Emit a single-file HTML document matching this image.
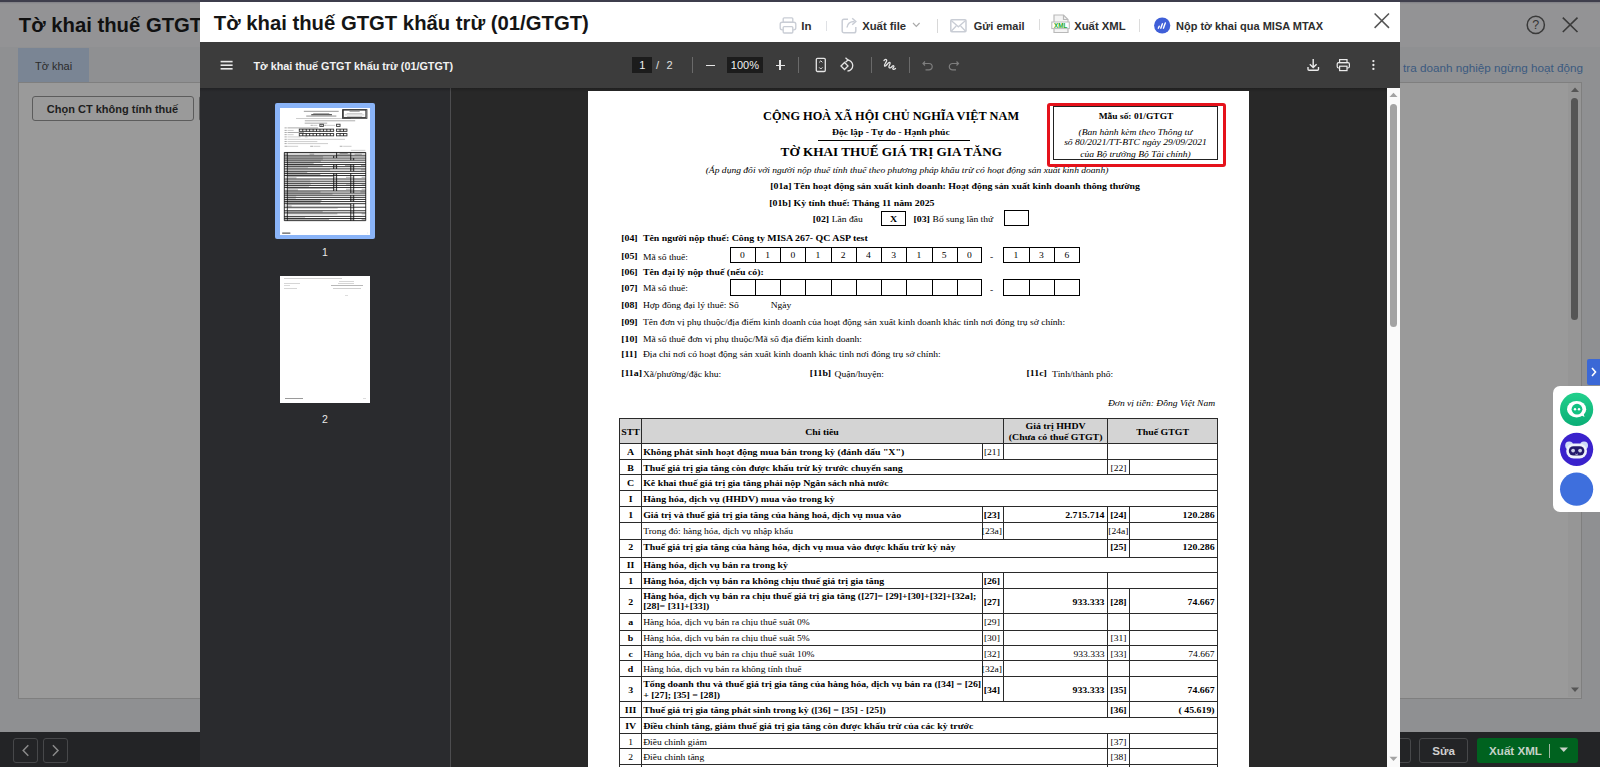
<!DOCTYPE html>
<html><head><meta charset="utf-8"><style>
*{box-sizing:border-box;margin:0;padding:0}
html,body{width:1600px;height:767px;overflow:hidden;background:#8f9092;position:relative}
.t{position:absolute;white-space:nowrap}
.r{position:absolute}
svg{position:absolute;overflow:visible}
</style></head><body>
<div class="r" style="left:0.00px;top:0.00px;width:1600.00px;height:47.00px;background:#939395"></div>
<div class="r" style="left:0.00px;top:0.00px;width:1600.00px;height:2.00px;background:#3e3e4c"></div>
<div class="r" style="left:0.00px;top:2.00px;width:1600.00px;height:2.00px;background:linear-gradient(#7f7f85,#939395)"></div>
<div class="t" style="left:18.80px;top:14.72px;font-size:20.3px;line-height:20.3px;font-family:'Liberation Sans',sans-serif;font-weight:bold;font-style:normal;color:#111;">Tờ khai thuế GTGT</div>
<svg style="left:1526px;top:15px" width="20" height="20"><circle cx="9.8" cy="9.9" r="8.6" fill="none" stroke="#3a3a3a" stroke-width="1.5"/><text x="9.8" y="14.3" font-family="Liberation Sans" font-size="12.5" text-anchor="middle" fill="#333">?</text></svg>
<svg style="left:1560px;top:15px" width="20" height="20"><path d="M2.8 2.6 L17.5 17 M17.5 2.6 L2.8 17" stroke="#3a3a3a" stroke-width="1.6"/></svg>
<div class="t" style="left:1403.00px;top:62.10px;font-size:11.7px;line-height:11.7px;font-family:'Liberation Sans',sans-serif;font-weight:normal;font-style:normal;color:#3b5a80;">tra doanh nghiệp ngừng hoạt động</div>
<div class="r" style="left:18.00px;top:48.00px;width:71.00px;height:34.00px;background:#7a8594"></div>
<div class="t" style="left:-546.50px;width:1200px;text-align:center;top:61.09px;font-size:11.0px;line-height:11.0px;font-family:'Liberation Sans',sans-serif;font-weight:normal;font-style:normal;color:#2b2b2b;">Tờ khai</div>
<div class="r" style="left:17.60px;top:82.00px;width:1564.40px;height:617.00px;background:#9a9a9a;border:1px solid #7f7f7f"></div>
<div class="r" style="left:1568.00px;top:83.00px;width:13.00px;height:614.00px;background:#969696"></div>
<div class="r" style="left:1571.00px;top:98.00px;width:7.00px;height:222.00px;background:#555;border-radius:4px"></div>
<svg style="left:1570px;top:86px" width="10" height="8"><path d="M1 6 L5 1.5 L9 6 Z" fill="#555"/></svg>
<svg style="left:1570px;top:686px" width="10" height="8"><path d="M1 1.5 L5 6 L9 1.5 Z" fill="#555"/></svg>
<div class="r" style="left:32.30px;top:96.00px;width:161.50px;height:25.00px;border:1px solid #5c5c5c;border-radius:3px"></div>
<div class="t" style="left:-487.50px;width:1200px;text-align:center;top:103.59px;font-size:11.0px;line-height:11.0px;font-family:'Liberation Sans',sans-serif;font-weight:bold;font-style:normal;color:#1e1e1e;">Chọn CT không tính thuế</div>
<div class="r" style="left:199.00px;top:96.00px;width:4.00px;height:25.00px;border:1px solid #5c5c5c;border-radius:3px"></div>
<div class="r" style="left:0.00px;top:732.00px;width:1600.00px;height:35.00px;background:#232426"></div>
<div class="r" style="left:13.00px;top:738.00px;width:25.00px;height:25.00px;border:1px solid #47484a;border-radius:3px"></div>
<div class="r" style="left:43.00px;top:738.00px;width:25.00px;height:25.00px;border:1px solid #47484a;border-radius:3px"></div>
<svg style="left:13px;top:738px" width="25" height="25"><path d="M15.3 7.3 L10.2 12.5 L15.3 17.7" fill="none" stroke="#8a8a8a" stroke-width="1.5"/></svg>
<svg style="left:43px;top:738px" width="25" height="25"><path d="M9.9 7.3 L15 12.5 L9.9 17.7" fill="none" stroke="#8a8a8a" stroke-width="1.5"/></svg>
<div class="r" style="left:1395.00px;top:738.00px;width:16.00px;height:25.00px;border:1px solid #47484a;border-radius:3px"></div>
<div class="r" style="left:1419.00px;top:738.00px;width:49.00px;height:25.00px;border:1px solid #47484a;border-radius:3px"></div>
<div class="t" style="left:843.60px;width:1200px;text-align:center;top:745.38px;font-size:11.6px;line-height:11.6px;font-family:'Liberation Sans',sans-serif;font-weight:bold;font-style:normal;color:#d0d0d0;">Sửa</div>
<div class="r" style="left:1477.00px;top:738.00px;width:101.00px;height:25.00px;background:#00621f;border-radius:3px"></div>
<div class="t" style="left:915.50px;width:1200px;text-align:center;top:745.38px;font-size:11.6px;line-height:11.6px;font-family:'Liberation Sans',sans-serif;font-weight:bold;font-style:normal;color:#c5d2c7;">Xuất XML</div>
<div class="r" style="left:1548.50px;top:744.00px;width:1.00px;height:14.00px;background:#9fb9a3"></div>
<svg style="left:1559px;top:747px" width="10" height="6"><path d="M0.5 0.5 L9 0.5 L4.75 5 Z" fill="#c8d2c8"/></svg>
<div class="r" style="left:1587.00px;top:359.00px;width:13.00px;height:26.00px;background:#3b68d6;border-radius:2px 0 0 2px"></div>
<svg style="left:1590px;top:366px" width="8" height="12"><path d="M2 2 L5.5 6 L2 10" fill="none" stroke="#fff" stroke-width="1.6"/></svg>
<div class="r" style="left:1553.00px;top:386.00px;width:47.00px;height:126.00px;background:#fff;border-radius:7px 0 0 7px"></div>
<svg style="left:1560px;top:393px" width="34" height="34"><defs><linearGradient id="g1" x1="0" y1="0" x2="0" y2="1"><stop offset="0" stop-color="#22d08c"/><stop offset="1" stop-color="#0aae76"/></linearGradient></defs>
<circle cx="16.6" cy="16.4" r="16.6" fill="url(#g1)"/><ellipse cx="16.6" cy="16.2" rx="9.6" ry="8.3" fill="#fff"/><path d="M20 21.5 L24.5 24 L23 18.5 Z" fill="#fff"/><circle cx="17" cy="16.2" r="5.4" fill="#12c282"/><circle cx="15" cy="16.2" r="1.2" fill="#fff"/><circle cx="19" cy="16.2" r="1.2" fill="#fff"/></svg>
<svg style="left:1560px;top:433px" width="34" height="34"><circle cx="16.6" cy="16.3" r="16.6" fill="#3a22cc"/><circle cx="9.2" cy="12.6" r="4" fill="#cfdcf7"/><circle cx="24" cy="12.6" r="4" fill="#cfdcf7"/><rect x="6.2" y="10.5" width="20.8" height="15" rx="7.5" fill="#eef2fb"/><rect x="8.8" y="13.2" width="15.6" height="9.4" rx="4.7" fill="#23196b"/><circle cx="13.1" cy="17.6" r="1.9" fill="#c8cde6"/><circle cx="20.1" cy="17.6" r="1.9" fill="#c8cde6"/><path d="M15.3 21 Q16.6 22 17.9 21" stroke="#c8cde6" stroke-width="0.9" fill="none"/></svg>
<svg style="left:1560px;top:473px" width="34" height="34"><circle cx="16.6" cy="16.2" r="16.6" fill="#3e6fdd"/></svg>
<div class="r" style="left:200.00px;top:2.00px;width:1200.00px;height:40.00px;background:#fff"></div>
<div class="t" style="left:213.80px;top:13.12px;font-size:20.3px;line-height:20.3px;font-family:'Liberation Sans',sans-serif;font-weight:bold;font-style:normal;color:#151515;">Tờ khai thuế GTGT khấu trừ (01/GTGT)</div>
<svg style="left:779px;top:16px" width="20" height="20"><rect x="4.2" y="1.8" width="9.6" height="4.6" rx="1" fill="none" stroke="#c9cdd5" stroke-width="1.35"/><rect x="1.2" y="6.2" width="15.6" height="7.6" rx="2" fill="none" stroke="#c9cdd5" stroke-width="1.35"/><rect x="4.2" y="10.6" width="9.6" height="6.4" rx="1" fill="#fff" stroke="#c9cdd5" stroke-width="1.35"/></svg>
<div class="t" style="left:801.30px;top:20.67px;font-size:11.5px;line-height:11.5px;font-family:'Liberation Sans',sans-serif;font-weight:bold;font-style:normal;color:#2e2e2e;">In</div>
<div class="r" style="left:826.30px;top:21.00px;width:1.00px;height:10.00px;background:#dfe1e5"></div>
<svg style="left:841px;top:16px" width="20" height="20"><path d="M7 3.2 H3 a1.8 1.8 0 0 0 -1.8 1.8 V15 a1.8 1.8 0 0 0 1.8 1.8 H13 a1.8 1.8 0 0 0 1.8 -1.8 V11" fill="none" stroke="#c9cdd5" stroke-width="1.5"/><path d="M6 11.5 C6.5 7.5 9 5.5 13.5 5.5" fill="none" stroke="#c9cdd5" stroke-width="1.5"/><path d="M11.2 2.2 L14.8 5.5 L11.2 8.8" fill="none" stroke="#c9cdd5" stroke-width="1.5"/></svg>
<div class="t" style="left:862.20px;top:20.83px;font-size:11.3px;line-height:11.3px;font-family:'Liberation Sans',sans-serif;font-weight:bold;font-style:normal;color:#2e2e2e;">Xuất file</div>
<svg style="left:912px;top:22px" width="9" height="6"><path d="M1 1 L4.3 4.3 L7.6 1" fill="none" stroke="#aaa" stroke-width="1.2"/></svg>
<div class="r" style="left:937.00px;top:19.00px;width:1.00px;height:14.00px;background:#d8d8d8"></div>
<svg style="left:950px;top:19px" width="18" height="15"><rect x="0.8" y="0.8" width="15.2" height="12" rx="1" fill="none" stroke="#c9cdd5" stroke-width="1.5"/><path d="M1.2 1.5 L8.4 7.8 L15.6 1.5 M1.2 12.2 L6.2 7 M15.6 12.2 L10.6 7" fill="none" stroke="#c9cdd5" stroke-width="1.3"/></svg>
<div class="t" style="left:973.80px;top:21.09px;font-size:11.0px;line-height:11.0px;font-family:'Liberation Sans',sans-serif;font-weight:bold;font-style:normal;color:#2e2e2e;">Gửi email</div>
<div class="r" style="left:1039.00px;top:19.00px;width:1.00px;height:11.00px;background:#dcdcdc"></div>
<svg style="left:1051px;top:14px" width="20" height="20"><path d="M3 1 H12.5 L17 5.5 V18.5 H3 Z" fill="#f4f4f4" stroke="#b9b9b9" stroke-width="1.2"/><path d="M12.5 1 V5.5 H17" fill="none" stroke="#b9b9b9" stroke-width="1.2"/><rect x="0.8" y="8" width="17.5" height="6.6" fill="#fff" stroke="#b9b9b9" stroke-width="1"/><text x="9.6" y="13.6" font-family="Liberation Sans" font-weight="bold" font-size="6.3" text-anchor="middle" fill="#17a82a">XML</text></svg>
<div class="t" style="left:1074.20px;top:21.33px;font-size:11.3px;line-height:11.3px;font-family:'Liberation Sans',sans-serif;font-weight:bold;font-style:normal;color:#2e2e2e;">Xuất XML</div>
<div class="r" style="left:1139.30px;top:19.00px;width:1.00px;height:13.00px;background:#dcdcdc"></div>
<svg style="left:1154px;top:17px" width="17" height="17"><circle cx="8.2" cy="8.5" r="8.1" fill="#3f5fd8"/><path d="M4.3 11.2 L5.2 9.2 M6.8 11.2 L8.4 6.8 M9.4 11.2 L11.3 6" stroke="#fff" stroke-width="1.4" stroke-linecap="round"/></svg>
<div class="t" style="left:1176.00px;top:21.29px;font-size:11.0px;line-height:11.0px;font-family:'Liberation Sans',sans-serif;font-weight:bold;font-style:normal;color:#2e2e2e;">Nộp tờ khai qua MISA MTAX</div>
<svg style="left:1373px;top:12px" width="18" height="18"><path d="M1.6 1.5 L16 15.9 M16 1.5 L1.6 15.9" stroke="#555" stroke-width="1.5"/></svg>
<div class="r" style="left:200.00px;top:42.00px;width:1200.00px;height:46.00px;background:#3c3c3c"></div>
<svg style="left:220px;top:60px" width="14" height="11"><rect x="0.6" y="0.8" width="12" height="1.6" fill="#e8e8e8"/><rect x="0.6" y="4.4" width="12" height="1.6" fill="#e8e8e8"/><rect x="0.6" y="8" width="12" height="1.6" fill="#e8e8e8"/></svg>
<div class="t" style="left:253.40px;top:60.66px;font-size:10.8px;line-height:10.8px;font-family:'Liberation Sans',sans-serif;font-weight:bold;font-style:normal;color:#f2f2f2;">Tờ khai thuế GTGT khấu trừ (01/GTGT)</div>
<div class="r" style="left:632.40px;top:56.70px;width:19.80px;height:16.40px;background:#1c1c1c"></div>
<div class="t" style="left:42.30px;width:1200px;text-align:center;top:60.19px;font-size:11.0px;line-height:11.0px;font-family:'Liberation Sans',sans-serif;font-weight:normal;font-style:normal;color:#f0f0f0;">1</div>
<div class="t" style="left:57.50px;width:1200px;text-align:center;top:60.19px;font-size:11.0px;line-height:11.0px;font-family:'Liberation Sans',sans-serif;font-weight:normal;font-style:normal;color:#e0e0e0;">/</div>
<div class="t" style="left:69.50px;width:1200px;text-align:center;top:60.19px;font-size:11.0px;line-height:11.0px;font-family:'Liberation Sans',sans-serif;font-weight:normal;font-style:normal;color:#e0e0e0;">2</div>
<div class="r" style="left:692.30px;top:57.40px;width:1.00px;height:15.70px;background:#6a6a6a"></div>
<div class="r" style="left:705.50px;top:64.60px;width:9.00px;height:1.50px;background:#e6e6e6"></div>
<div class="r" style="left:726.90px;top:56.70px;width:36.00px;height:16.40px;background:#1c1c1c"></div>
<div class="t" style="left:144.90px;width:1200px;text-align:center;top:60.19px;font-size:11.0px;line-height:11.0px;font-family:'Liberation Sans',sans-serif;font-weight:normal;font-style:normal;color:#f0f0f0;">100%</div>
<div class="r" style="left:775.50px;top:64.60px;width:9.00px;height:1.50px;background:#e6e6e6"></div>
<div class="r" style="left:779.30px;top:60.20px;width:1.50px;height:9.40px;background:#e6e6e6"></div>
<div class="r" style="left:797.60px;top:57.40px;width:1.00px;height:15.70px;background:#6a6a6a"></div>
<svg style="left:814px;top:57px" width="14" height="16"><rect x="2.3" y="1.3" width="9" height="13.2" rx="1.2" fill="none" stroke="#e4e4e4" stroke-width="1.3"/><path d="M5.2 5.4 L6.8 3.8 L8.4 5.4 M5.2 10.4 L6.8 12 L8.4 10.4" fill="none" stroke="#e4e4e4" stroke-width="1"/></svg>
<svg style="left:839px;top:56px" width="17" height="17"><path d="M2 10 L5.5 6.5 L9 10 L5.5 13.5 Z" fill="none" stroke="#e4e4e4" stroke-width="1.3"/><path d="M8 4 A5.5 5.5 0 1 1 8.5 15" fill="none" stroke="#e4e4e4" stroke-width="1.3"/><path d="M6.5 1.8 L9 4 L6.5 6.3" fill="none" stroke="#e4e4e4" stroke-width="1.3"/></svg>
<div class="r" style="left:871.20px;top:57.40px;width:1.00px;height:15.70px;background:#6a6a6a"></div>
<svg style="left:882px;top:57px" width="16" height="16"><path d="M2 3.5 C4 1.5 6 2.5 3.5 6 C1.5 9 2.5 10.5 5 7.5 C7.5 4.5 9 5 7.5 8 C6 11 8 12 10 9.5 C11.5 8 13 9 11 11 C10 12.5 12 13 13.5 11.5" fill="none" stroke="#e4e4e4" stroke-width="1.3" stroke-linecap="round"/></svg>
<div class="r" style="left:908.50px;top:57.40px;width:1.00px;height:15.70px;background:#6a6a6a"></div>
<svg style="left:922px;top:59px" width="12" height="12"><path d="M3 2.5 L1 4.5 L3 6.5 M1.2 4.5 H7 A3.2 3.2 0 0 1 7 10.9 H3.5" fill="none" stroke="#7e7e7e" stroke-width="1.2"/></svg>
<svg style="left:948px;top:59px" width="12" height="12"><path d="M8.5 2.5 L10.5 4.5 L8.5 6.5 M10.3 4.5 H4.5 A3.2 3.2 0 0 0 4.5 10.9 H8" fill="none" stroke="#7e7e7e" stroke-width="1.2"/></svg>
<svg style="left:1307px;top:58px" width="13" height="14"><path d="M6.2 1 V9.5 M2.8 6.2 L6.2 9.6 L9.6 6.2 M1 9 V11.2 Q1 12.3 2.1 12.3 H10.4 Q11.5 12.3 11.5 11.2 V9" fill="none" stroke="#ebebeb" stroke-width="1.4"/></svg>
<svg style="left:1336px;top:58px" width="16" height="15"><rect x="3.6" y="1.6" width="7.4" height="3" fill="none" stroke="#ebebeb" stroke-width="1.2"/><rect x="1.2" y="4.6" width="12.2" height="5.4" rx="1.5" fill="none" stroke="#ebebeb" stroke-width="1.2"/><rect x="3.6" y="8.2" width="7.4" height="4.4" fill="#3c3c3c" stroke="#ebebeb" stroke-width="1.2"/></svg>
<svg style="left:1370px;top:58px" width="8" height="14"><circle cx="3.4" cy="3.1" r="1.15" fill="#ececec"/><circle cx="3.4" cy="7" r="1.15" fill="#ececec"/><circle cx="3.4" cy="10.9" r="1.15" fill="#ececec"/></svg>
<div class="r" style="left:200.00px;top:88.00px;width:250.00px;height:679.00px;background:#2a2b2e"></div>
<div class="r" style="left:450.00px;top:88.00px;width:1.00px;height:679.00px;background:#4d4d4f"></div>
<div class="r" style="left:451.00px;top:88.00px;width:936.00px;height:679.00px;background:#282828"></div>
<div class="r" style="left:200.00px;top:88.00px;width:1187.00px;height:4.00px;background:linear-gradient(rgba(0,0,0,0.22),rgba(0,0,0,0))"></div>
<div class="r" style="left:275.30px;top:103.30px;width:99.70px;height:136.20px;background:#8ab4f8;border-radius:2px"></div>
<svg style="left:280px;top:108px" width="90" height="127"><rect x="0" y="0" width="90" height="127" fill="#fff"/><rect x="23.83" y="2.79" width="34.87" height="1.11" fill="#000" fill-opacity="0.36"/><rect x="33.22" y="5.02" width="16.06" height="0.90" fill="#000" fill-opacity="0.36"/><rect x="31.25" y="6.22" width="20.70" height="1.00" fill="#000" fill-opacity="0.8"/><rect x="26.22" y="7.48" width="30.14" height="1.18" fill="#000" fill-opacity="0.36"/><rect x="16.03" y="10.11" width="54.84" height="0.90" fill="#000" fill-opacity="0.22"/><rect x="24.81" y="12.36" width="50.38" height="0.90" fill="#000" fill-opacity="0.36"/><rect x="24.67" y="14.70" width="22.52" height="0.90" fill="#000" fill-opacity="0.36"/><rect x="30.59" y="16.84" width="2.23" height="0.90" fill="#000" fill-opacity="0.36"/><rect x="33.18" y="16.87" width="4.22" height="0.90" fill="#000" fill-opacity="0.22"/><rect x="39.87" y="16.26" width="3.49" height="2.13" fill="none" stroke="#111" stroke-width="0.9" stroke-opacity="0.85"/><rect x="41.13" y="16.84" width="0.97" height="0.90" fill="#000" fill-opacity="0.36"/><rect x="44.32" y="16.84" width="2.23" height="0.90" fill="#000" fill-opacity="0.36"/><rect x="46.92" y="16.87" width="8.25" height="0.90" fill="#000" fill-opacity="0.22"/><rect x="56.57" y="16.22" width="3.47" height="2.17" fill="none" stroke="#111" stroke-width="0.9" stroke-opacity="0.85"/><rect x="63.31" y="2.09" width="22.52" height="7.33" fill="none" stroke="#111" stroke-width="0.9" stroke-opacity="0.85"/><rect x="69.53" y="2.98" width="10.17" height="0.90" fill="#000" fill-opacity="0.36"/><rect x="66.77" y="4.98" width="15.54" height="0.90" fill="#000" fill-opacity="0.22"/><rect x="64.82" y="6.42" width="19.45" height="0.90" fill="#000" fill-opacity="0.22"/><rect x="67.01" y="7.97" width="15.08" height="0.90" fill="#000" fill-opacity="0.22"/><rect x="62.55" y="1.63" width="24.37" height="8.69" fill="none" stroke="#111" stroke-width="0.9" stroke-opacity="0.85"/><rect x="4.52" y="19.45" width="2.23" height="0.90" fill="#000" fill-opacity="0.36"/><rect x="7.48" y="19.45" width="30.66" height="0.90" fill="#000" fill-opacity="0.36"/><rect x="4.52" y="21.91" width="2.23" height="0.90" fill="#000" fill-opacity="0.36"/><rect x="7.48" y="21.94" width="6.14" height="0.90" fill="#000" fill-opacity="0.22"/><rect x="4.52" y="24.10" width="2.23" height="0.90" fill="#000" fill-opacity="0.36"/><rect x="7.48" y="24.10" width="16.47" height="0.90" fill="#000" fill-opacity="0.36"/><rect x="4.52" y="26.23" width="2.23" height="0.90" fill="#000" fill-opacity="0.36"/><rect x="7.48" y="26.26" width="6.14" height="0.90" fill="#000" fill-opacity="0.22"/><rect x="4.52" y="28.46" width="2.23" height="0.90" fill="#000" fill-opacity="0.36"/><rect x="7.48" y="28.48" width="13.08" height="0.90" fill="#000" fill-opacity="0.22"/><rect x="24.88" y="28.48" width="2.82" height="0.90" fill="#000" fill-opacity="0.22"/><rect x="4.52" y="30.81" width="2.23" height="0.90" fill="#000" fill-opacity="0.36"/><rect x="7.48" y="30.83" width="57.50" height="0.90" fill="#000" fill-opacity="0.22"/><rect x="4.52" y="33.14" width="2.23" height="0.90" fill="#000" fill-opacity="0.36"/><rect x="7.48" y="33.17" width="29.83" height="0.90" fill="#000" fill-opacity="0.22"/><rect x="4.52" y="35.17" width="2.16" height="0.90" fill="#000" fill-opacity="0.36"/><rect x="7.48" y="35.19" width="40.56" height="0.90" fill="#000" fill-opacity="0.22"/><rect x="4.52" y="37.79" width="2.83" height="0.90" fill="#000" fill-opacity="0.36"/><rect x="7.48" y="37.81" width="10.67" height="0.90" fill="#000" fill-opacity="0.22"/><rect x="30.20" y="37.79" width="2.91" height="0.90" fill="#000" fill-opacity="0.36"/><rect x="33.58" y="37.81" width="6.72" height="0.90" fill="#000" fill-opacity="0.22"/><rect x="59.72" y="37.79" width="2.76" height="0.90" fill="#000" fill-opacity="0.36"/><rect x="63.16" y="37.81" width="8.34" height="0.90" fill="#000" fill-opacity="0.22"/><rect x="70.79" y="41.85" width="14.60" height="0.90" fill="#000" fill-opacity="0.22"/><rect x="19.29" y="21.12" width="34.35" height="2.24" fill="none" stroke="#111" stroke-width="0.9" stroke-opacity="0.85"/><rect x="22.30" y="21.12" width="1.00" height="2.24" fill="#000" fill-opacity="0.8"/><rect x="25.73" y="21.12" width="1.00" height="2.24" fill="#000" fill-opacity="0.8"/><rect x="29.17" y="21.12" width="1.00" height="2.24" fill="#000" fill-opacity="0.8"/><rect x="32.60" y="21.12" width="1.00" height="2.24" fill="#000" fill-opacity="0.8"/><rect x="36.04" y="21.12" width="1.00" height="2.24" fill="#000" fill-opacity="0.8"/><rect x="39.47" y="21.12" width="1.00" height="2.24" fill="#000" fill-opacity="0.8"/><rect x="42.91" y="21.12" width="1.00" height="2.24" fill="#000" fill-opacity="0.8"/><rect x="46.34" y="21.12" width="1.00" height="2.24" fill="#000" fill-opacity="0.8"/><rect x="49.78" y="21.12" width="1.00" height="2.24" fill="#000" fill-opacity="0.8"/><rect x="56.53" y="21.12" width="10.40" height="2.24" fill="none" stroke="#111" stroke-width="0.9" stroke-opacity="0.85"/><rect x="59.57" y="21.12" width="1.00" height="2.24" fill="#000" fill-opacity="0.8"/><rect x="63.04" y="21.12" width="1.00" height="2.24" fill="#000" fill-opacity="0.8"/><rect x="54.74" y="21.92" width="0.43" height="0.90" fill="#000" fill-opacity="0.22"/><rect x="20.69" y="21.76" width="0.65" height="0.90" fill="#000" fill-opacity="0.22"/><rect x="24.12" y="21.76" width="0.65" height="0.90" fill="#000" fill-opacity="0.22"/><rect x="27.56" y="21.76" width="0.65" height="0.90" fill="#000" fill-opacity="0.22"/><rect x="30.99" y="21.76" width="0.65" height="0.90" fill="#000" fill-opacity="0.22"/><rect x="34.43" y="21.76" width="0.65" height="0.90" fill="#000" fill-opacity="0.22"/><rect x="37.86" y="21.76" width="0.65" height="0.90" fill="#000" fill-opacity="0.22"/><rect x="41.30" y="21.76" width="0.65" height="0.90" fill="#000" fill-opacity="0.22"/><rect x="44.73" y="21.76" width="0.65" height="0.90" fill="#000" fill-opacity="0.22"/><rect x="48.17" y="21.76" width="0.65" height="0.90" fill="#000" fill-opacity="0.22"/><rect x="51.60" y="21.76" width="0.65" height="0.90" fill="#000" fill-opacity="0.22"/><rect x="57.94" y="21.76" width="0.65" height="0.90" fill="#000" fill-opacity="0.22"/><rect x="61.41" y="21.76" width="0.65" height="0.90" fill="#000" fill-opacity="0.22"/><rect x="64.88" y="21.76" width="0.65" height="0.90" fill="#000" fill-opacity="0.22"/><rect x="19.29" y="25.56" width="34.35" height="2.28" fill="none" stroke="#111" stroke-width="0.9" stroke-opacity="0.85"/><rect x="22.30" y="25.56" width="1.00" height="2.28" fill="#000" fill-opacity="0.8"/><rect x="25.73" y="25.56" width="1.00" height="2.28" fill="#000" fill-opacity="0.8"/><rect x="29.17" y="25.56" width="1.00" height="2.28" fill="#000" fill-opacity="0.8"/><rect x="32.60" y="25.56" width="1.00" height="2.28" fill="#000" fill-opacity="0.8"/><rect x="36.04" y="25.56" width="1.00" height="2.28" fill="#000" fill-opacity="0.8"/><rect x="39.47" y="25.56" width="1.00" height="2.28" fill="#000" fill-opacity="0.8"/><rect x="42.91" y="25.56" width="1.00" height="2.28" fill="#000" fill-opacity="0.8"/><rect x="46.34" y="25.56" width="1.00" height="2.28" fill="#000" fill-opacity="0.8"/><rect x="49.78" y="25.56" width="1.00" height="2.28" fill="#000" fill-opacity="0.8"/><rect x="56.53" y="25.56" width="10.40" height="2.28" fill="none" stroke="#111" stroke-width="0.9" stroke-opacity="0.85"/><rect x="59.57" y="25.56" width="1.00" height="2.28" fill="#000" fill-opacity="0.8"/><rect x="63.04" y="25.56" width="1.00" height="2.28" fill="#000" fill-opacity="0.8"/><rect x="54.74" y="26.40" width="0.43" height="0.90" fill="#000" fill-opacity="0.22"/><rect x="4.29" y="44.46" width="81.44" height="3.44" fill="#d4d4d4"/><rect x="4.53" y="45.71" width="2.53" height="0.90" fill="#000" fill-opacity="0.36"/><rect x="29.57" y="45.71" width="4.58" height="0.90" fill="#000" fill-opacity="0.36"/><rect x="59.57" y="44.97" width="8.19" height="0.90" fill="#000" fill-opacity="0.36"/><rect x="57.29" y="46.39" width="12.76" height="0.90" fill="#000" fill-opacity="0.36"/><rect x="74.63" y="45.71" width="7.19" height="0.90" fill="#000" fill-opacity="0.36"/><rect x="6.81" y="44.46" width="1.00" height="3.44" fill="#000" fill-opacity="0.8"/><rect x="56.10" y="44.46" width="1.00" height="3.44" fill="#000" fill-opacity="0.8"/><rect x="70.23" y="44.46" width="1.00" height="3.44" fill="#000" fill-opacity="0.8"/><rect x="7.52" y="48.44" width="35.56" height="0.90" fill="#000" fill-opacity="0.36"/><rect x="6.81" y="47.89" width="1.00" height="2.17" fill="#000" fill-opacity="0.8"/><rect x="5.32" y="48.44" width="0.97" height="0.90" fill="#000" fill-opacity="0.36"/><rect x="53.15" y="47.89" width="1.00" height="2.17" fill="#000" fill-opacity="0.8"/><rect x="56.10" y="47.89" width="1.00" height="2.17" fill="#000" fill-opacity="0.8"/><rect x="70.23" y="47.89" width="1.00" height="2.17" fill="#000" fill-opacity="0.8"/><rect x="53.90" y="48.46" width="2.17" height="0.90" fill="#000" fill-opacity="0.22"/><rect x="7.52" y="50.61" width="35.34" height="0.90" fill="#000" fill-opacity="0.36"/><rect x="6.81" y="50.07" width="1.00" height="2.08" fill="#000" fill-opacity="0.8"/><rect x="5.35" y="50.61" width="0.89" height="0.90" fill="#000" fill-opacity="0.36"/><rect x="70.23" y="50.07" width="1.00" height="2.08" fill="#000" fill-opacity="0.8"/><rect x="73.20" y="50.07" width="1.00" height="2.08" fill="#000" fill-opacity="0.8"/><rect x="71.13" y="50.64" width="2.17" height="0.90" fill="#000" fill-opacity="0.22"/><rect x="7.52" y="52.69" width="33.44" height="0.90" fill="#000" fill-opacity="0.36"/><rect x="6.81" y="52.14" width="1.00" height="2.16" fill="#000" fill-opacity="0.8"/><rect x="5.32" y="52.69" width="0.97" height="0.90" fill="#000" fill-opacity="0.36"/><rect x="7.52" y="54.85" width="26.09" height="0.90" fill="#000" fill-opacity="0.36"/><rect x="6.81" y="54.30" width="1.00" height="2.17" fill="#000" fill-opacity="0.8"/><rect x="5.54" y="54.85" width="0.52" height="0.90" fill="#000" fill-opacity="0.36"/><rect x="7.52" y="57.02" width="35.13" height="0.90" fill="#000" fill-opacity="0.36"/><rect x="6.81" y="56.48" width="1.00" height="2.17" fill="#000" fill-opacity="0.8"/><rect x="5.47" y="57.02" width="0.67" height="0.90" fill="#000" fill-opacity="0.36"/><rect x="53.15" y="56.48" width="1.00" height="2.17" fill="#000" fill-opacity="0.8"/><rect x="56.10" y="56.48" width="1.00" height="2.17" fill="#000" fill-opacity="0.8"/><rect x="70.23" y="56.48" width="1.00" height="2.17" fill="#000" fill-opacity="0.8"/><rect x="73.20" y="56.48" width="1.00" height="2.17" fill="#000" fill-opacity="0.8"/><rect x="53.87" y="57.02" width="2.23" height="0.90" fill="#000" fill-opacity="0.36"/><rect x="64.96" y="57.02" width="5.36" height="0.90" fill="#000" fill-opacity="0.36"/><rect x="71.10" y="57.02" width="2.23" height="0.90" fill="#000" fill-opacity="0.36"/><rect x="80.96" y="57.02" width="4.36" height="0.90" fill="#000" fill-opacity="0.36"/><rect x="7.52" y="59.22" width="20.39" height="0.90" fill="#000" fill-opacity="0.22"/><rect x="6.81" y="58.65" width="1.00" height="2.24" fill="#000" fill-opacity="0.8"/><rect x="53.15" y="58.65" width="1.00" height="2.24" fill="#000" fill-opacity="0.8"/><rect x="56.10" y="58.65" width="1.00" height="2.24" fill="#000" fill-opacity="0.8"/><rect x="70.23" y="58.65" width="1.00" height="2.24" fill="#000" fill-opacity="0.8"/><rect x="73.20" y="58.65" width="1.00" height="2.24" fill="#000" fill-opacity="0.8"/><rect x="53.62" y="59.22" width="2.74" height="0.90" fill="#000" fill-opacity="0.22"/><rect x="70.85" y="59.22" width="2.74" height="0.90" fill="#000" fill-opacity="0.22"/><rect x="7.52" y="61.44" width="42.56" height="0.90" fill="#000" fill-opacity="0.36"/><rect x="6.81" y="60.89" width="1.00" height="2.40" fill="#000" fill-opacity="0.8"/><rect x="5.47" y="61.44" width="0.67" height="0.90" fill="#000" fill-opacity="0.36"/><rect x="70.23" y="60.89" width="1.00" height="2.40" fill="#000" fill-opacity="0.8"/><rect x="73.20" y="60.89" width="1.00" height="2.40" fill="#000" fill-opacity="0.8"/><rect x="71.10" y="61.44" width="2.23" height="0.90" fill="#000" fill-opacity="0.36"/><rect x="80.96" y="61.44" width="4.36" height="0.90" fill="#000" fill-opacity="0.36"/><rect x="7.52" y="63.84" width="19.72" height="0.90" fill="#000" fill-opacity="0.36"/><rect x="6.81" y="63.30" width="1.00" height="2.15" fill="#000" fill-opacity="0.8"/><rect x="5.28" y="63.84" width="1.04" height="0.90" fill="#000" fill-opacity="0.36"/><rect x="7.52" y="65.99" width="32.83" height="0.90" fill="#000" fill-opacity="0.36"/><rect x="6.81" y="65.44" width="1.00" height="2.09" fill="#000" fill-opacity="0.8"/><rect x="5.47" y="65.99" width="0.67" height="0.90" fill="#000" fill-opacity="0.36"/><rect x="53.15" y="65.44" width="1.00" height="2.09" fill="#000" fill-opacity="0.8"/><rect x="56.10" y="65.44" width="1.00" height="2.09" fill="#000" fill-opacity="0.8"/><rect x="70.23" y="65.44" width="1.00" height="2.09" fill="#000" fill-opacity="0.8"/><rect x="53.87" y="65.99" width="2.23" height="0.90" fill="#000" fill-opacity="0.36"/><rect x="7.52" y="68.05" width="45.38" height="0.90" fill="#000" fill-opacity="0.36"/><rect x="7.52" y="69.45" width="9.01" height="0.90" fill="#000" fill-opacity="0.36"/><rect x="6.81" y="67.53" width="1.00" height="3.48" fill="#000" fill-opacity="0.8"/><rect x="5.47" y="68.80" width="0.67" height="0.90" fill="#000" fill-opacity="0.36"/><rect x="53.15" y="67.53" width="1.00" height="3.48" fill="#000" fill-opacity="0.8"/><rect x="56.10" y="67.53" width="1.00" height="3.48" fill="#000" fill-opacity="0.8"/><rect x="70.23" y="67.53" width="1.00" height="3.48" fill="#000" fill-opacity="0.8"/><rect x="73.20" y="67.53" width="1.00" height="3.48" fill="#000" fill-opacity="0.8"/><rect x="53.87" y="68.80" width="2.23" height="0.90" fill="#000" fill-opacity="0.36"/><rect x="65.97" y="68.80" width="4.36" height="0.90" fill="#000" fill-opacity="0.36"/><rect x="71.10" y="68.80" width="2.23" height="0.90" fill="#000" fill-opacity="0.36"/><rect x="81.63" y="68.80" width="3.69" height="0.90" fill="#000" fill-opacity="0.36"/><rect x="7.52" y="71.58" width="22.68" height="0.90" fill="#000" fill-opacity="0.22"/><rect x="6.81" y="71.01" width="1.00" height="2.20" fill="#000" fill-opacity="0.8"/><rect x="5.47" y="71.55" width="0.67" height="0.90" fill="#000" fill-opacity="0.36"/><rect x="53.15" y="71.01" width="1.00" height="2.20" fill="#000" fill-opacity="0.8"/><rect x="56.10" y="71.01" width="1.00" height="2.20" fill="#000" fill-opacity="0.8"/><rect x="70.23" y="71.01" width="1.00" height="2.20" fill="#000" fill-opacity="0.8"/><rect x="73.20" y="71.01" width="1.00" height="2.20" fill="#000" fill-opacity="0.8"/><rect x="53.90" y="71.58" width="2.17" height="0.90" fill="#000" fill-opacity="0.22"/><rect x="7.52" y="73.78" width="22.68" height="0.90" fill="#000" fill-opacity="0.22"/><rect x="6.81" y="73.21" width="1.00" height="2.13" fill="#000" fill-opacity="0.8"/><rect x="5.43" y="73.75" width="0.75" height="0.90" fill="#000" fill-opacity="0.36"/><rect x="53.15" y="73.21" width="1.00" height="2.13" fill="#000" fill-opacity="0.8"/><rect x="56.10" y="73.21" width="1.00" height="2.13" fill="#000" fill-opacity="0.8"/><rect x="70.23" y="73.21" width="1.00" height="2.13" fill="#000" fill-opacity="0.8"/><rect x="73.20" y="73.21" width="1.00" height="2.13" fill="#000" fill-opacity="0.8"/><rect x="53.90" y="73.78" width="2.17" height="0.90" fill="#000" fill-opacity="0.22"/><rect x="71.13" y="73.78" width="2.17" height="0.90" fill="#000" fill-opacity="0.22"/><rect x="7.52" y="75.91" width="23.33" height="0.90" fill="#000" fill-opacity="0.22"/><rect x="6.81" y="75.34" width="1.00" height="2.06" fill="#000" fill-opacity="0.8"/><rect x="5.50" y="75.89" width="0.60" height="0.90" fill="#000" fill-opacity="0.36"/><rect x="53.15" y="75.34" width="1.00" height="2.06" fill="#000" fill-opacity="0.8"/><rect x="56.10" y="75.34" width="1.00" height="2.06" fill="#000" fill-opacity="0.8"/><rect x="70.23" y="75.34" width="1.00" height="2.06" fill="#000" fill-opacity="0.8"/><rect x="73.20" y="75.34" width="1.00" height="2.06" fill="#000" fill-opacity="0.8"/><rect x="53.90" y="75.91" width="2.17" height="0.90" fill="#000" fill-opacity="0.22"/><rect x="66.10" y="75.91" width="4.23" height="0.90" fill="#000" fill-opacity="0.22"/><rect x="71.13" y="75.91" width="2.17" height="0.90" fill="#000" fill-opacity="0.22"/><rect x="81.74" y="75.91" width="3.58" height="0.90" fill="#000" fill-opacity="0.22"/><rect x="7.52" y="77.98" width="21.56" height="0.90" fill="#000" fill-opacity="0.22"/><rect x="6.81" y="77.41" width="1.00" height="2.13" fill="#000" fill-opacity="0.8"/><rect x="5.43" y="77.95" width="0.75" height="0.90" fill="#000" fill-opacity="0.36"/><rect x="53.15" y="77.41" width="1.00" height="2.13" fill="#000" fill-opacity="0.8"/><rect x="56.10" y="77.41" width="1.00" height="2.13" fill="#000" fill-opacity="0.8"/><rect x="70.23" y="77.41" width="1.00" height="2.13" fill="#000" fill-opacity="0.8"/><rect x="73.20" y="77.41" width="1.00" height="2.13" fill="#000" fill-opacity="0.8"/><rect x="53.62" y="77.98" width="2.74" height="0.90" fill="#000" fill-opacity="0.22"/><rect x="7.52" y="80.06" width="46.03" height="0.90" fill="#000" fill-opacity="0.36"/><rect x="7.52" y="81.46" width="10.47" height="0.90" fill="#000" fill-opacity="0.36"/><rect x="6.81" y="79.54" width="1.00" height="3.42" fill="#000" fill-opacity="0.8"/><rect x="5.47" y="80.80" width="0.67" height="0.90" fill="#000" fill-opacity="0.36"/><rect x="53.15" y="79.54" width="1.00" height="3.42" fill="#000" fill-opacity="0.8"/><rect x="56.10" y="79.54" width="1.00" height="3.42" fill="#000" fill-opacity="0.8"/><rect x="70.23" y="79.54" width="1.00" height="3.42" fill="#000" fill-opacity="0.8"/><rect x="73.20" y="79.54" width="1.00" height="3.42" fill="#000" fill-opacity="0.8"/><rect x="53.87" y="80.80" width="2.23" height="0.90" fill="#000" fill-opacity="0.36"/><rect x="65.97" y="80.80" width="4.36" height="0.90" fill="#000" fill-opacity="0.36"/><rect x="71.10" y="80.80" width="2.23" height="0.90" fill="#000" fill-opacity="0.36"/><rect x="81.63" y="80.80" width="3.69" height="0.90" fill="#000" fill-opacity="0.36"/><rect x="7.52" y="83.51" width="33.04" height="0.90" fill="#000" fill-opacity="0.36"/><rect x="6.81" y="82.96" width="1.00" height="2.13" fill="#000" fill-opacity="0.8"/><rect x="5.02" y="83.51" width="1.57" height="0.90" fill="#000" fill-opacity="0.36"/><rect x="70.23" y="82.96" width="1.00" height="2.13" fill="#000" fill-opacity="0.8"/><rect x="73.20" y="82.96" width="1.00" height="2.13" fill="#000" fill-opacity="0.8"/><rect x="71.10" y="83.51" width="2.23" height="0.90" fill="#000" fill-opacity="0.36"/><rect x="80.40" y="83.51" width="4.92" height="0.90" fill="#000" fill-opacity="0.36"/><rect x="7.52" y="85.64" width="44.99" height="0.90" fill="#000" fill-opacity="0.36"/><rect x="6.81" y="85.10" width="1.00" height="2.13" fill="#000" fill-opacity="0.8"/><rect x="5.06" y="85.64" width="1.49" height="0.90" fill="#000" fill-opacity="0.36"/><rect x="7.52" y="87.80" width="8.67" height="0.90" fill="#000" fill-opacity="0.22"/><rect x="6.81" y="87.23" width="1.00" height="2.12" fill="#000" fill-opacity="0.8"/><rect x="5.48" y="87.80" width="0.65" height="0.90" fill="#000" fill-opacity="0.22"/><rect x="70.23" y="87.23" width="1.00" height="2.12" fill="#000" fill-opacity="0.8"/><rect x="73.20" y="87.23" width="1.00" height="2.12" fill="#000" fill-opacity="0.8"/><rect x="71.13" y="87.80" width="2.17" height="0.90" fill="#000" fill-opacity="0.22"/><rect x="7.52" y="89.92" width="8.31" height="0.90" fill="#000" fill-opacity="0.22"/><rect x="6.81" y="89.35" width="1.00" height="2.09" fill="#000" fill-opacity="0.8"/><rect x="5.48" y="89.92" width="0.65" height="0.90" fill="#000" fill-opacity="0.22"/><rect x="70.23" y="89.35" width="1.00" height="2.09" fill="#000" fill-opacity="0.8"/><rect x="73.20" y="89.35" width="1.00" height="2.09" fill="#000" fill-opacity="0.8"/><rect x="71.13" y="89.92" width="2.17" height="0.90" fill="#000" fill-opacity="0.22"/><rect x="7.52" y="91.98" width="34.00" height="0.90" fill="#000" fill-opacity="0.36"/><rect x="6.81" y="91.44" width="1.00" height="2.12" fill="#000" fill-opacity="0.8"/><rect x="5.32" y="91.98" width="0.97" height="0.90" fill="#000" fill-opacity="0.36"/><rect x="70.23" y="91.44" width="1.00" height="2.12" fill="#000" fill-opacity="0.8"/><rect x="73.20" y="91.44" width="1.00" height="2.12" fill="#000" fill-opacity="0.8"/><rect x="70.77" y="91.98" width="2.90" height="0.90" fill="#000" fill-opacity="0.36"/><rect x="7.52" y="94.10" width="33.06" height="0.90" fill="#000" fill-opacity="0.36"/><rect x="6.81" y="93.56" width="1.00" height="2.12" fill="#000" fill-opacity="0.8"/><rect x="5.06" y="94.10" width="1.49" height="0.90" fill="#000" fill-opacity="0.36"/><rect x="7.52" y="96.19" width="63.56" height="0.90" fill="#000" fill-opacity="0.36"/><rect x="7.52" y="97.59" width="4.13" height="0.90" fill="#000" fill-opacity="0.36"/><rect x="6.81" y="95.68" width="1.00" height="3.53" fill="#000" fill-opacity="0.8"/><rect x="5.47" y="96.94" width="0.67" height="0.90" fill="#000" fill-opacity="0.36"/><rect x="70.23" y="95.68" width="1.00" height="3.53" fill="#000" fill-opacity="0.8"/><rect x="73.20" y="95.68" width="1.00" height="3.53" fill="#000" fill-opacity="0.8"/><rect x="70.77" y="96.94" width="2.90" height="0.90" fill="#000" fill-opacity="0.36"/><rect x="7.52" y="99.78" width="50.16" height="0.90" fill="#000" fill-opacity="0.22"/><rect x="6.81" y="99.21" width="1.00" height="3.53" fill="#000" fill-opacity="0.8"/><rect x="5.47" y="99.75" width="0.67" height="0.90" fill="#000" fill-opacity="0.36"/><rect x="70.23" y="99.21" width="1.00" height="3.53" fill="#000" fill-opacity="0.8"/><rect x="73.20" y="99.21" width="1.00" height="3.53" fill="#000" fill-opacity="0.8"/><rect x="70.81" y="99.78" width="2.82" height="0.90" fill="#000" fill-opacity="0.22"/><rect x="7.52" y="103.28" width="35.16" height="0.90" fill="#000" fill-opacity="0.36"/><rect x="6.81" y="102.74" width="1.00" height="2.12" fill="#000" fill-opacity="0.8"/><rect x="5.47" y="103.28" width="0.67" height="0.90" fill="#000" fill-opacity="0.36"/><rect x="70.23" y="102.74" width="1.00" height="2.12" fill="#000" fill-opacity="0.8"/><rect x="73.20" y="102.74" width="1.00" height="2.12" fill="#000" fill-opacity="0.8"/><rect x="71.10" y="103.28" width="2.23" height="0.90" fill="#000" fill-opacity="0.36"/><rect x="7.52" y="105.40" width="49.87" height="0.90" fill="#000" fill-opacity="0.36"/><rect x="6.81" y="104.86" width="1.00" height="3.53" fill="#000" fill-opacity="0.8"/><rect x="5.47" y="105.40" width="0.67" height="0.90" fill="#000" fill-opacity="0.36"/><rect x="70.23" y="104.86" width="1.00" height="3.53" fill="#000" fill-opacity="0.8"/><rect x="73.20" y="104.86" width="1.00" height="3.53" fill="#000" fill-opacity="0.8"/><rect x="71.10" y="105.40" width="2.23" height="0.90" fill="#000" fill-opacity="0.36"/><rect x="81.63" y="105.40" width="3.69" height="0.90" fill="#000" fill-opacity="0.36"/><rect x="7.52" y="108.96" width="17.59" height="0.90" fill="#000" fill-opacity="0.22"/><rect x="6.81" y="108.39" width="1.00" height="2.12" fill="#000" fill-opacity="0.8"/><rect x="4.96" y="108.93" width="1.68" height="0.90" fill="#000" fill-opacity="0.36"/><rect x="70.23" y="108.39" width="1.00" height="2.12" fill="#000" fill-opacity="0.8"/><rect x="73.20" y="108.39" width="1.00" height="2.12" fill="#000" fill-opacity="0.8"/><rect x="71.13" y="108.96" width="2.17" height="0.90" fill="#000" fill-opacity="0.22"/><rect x="7.52" y="111.05" width="41.64" height="0.90" fill="#000" fill-opacity="0.36"/><rect x="6.81" y="110.51" width="1.00" height="2.12" fill="#000" fill-opacity="0.8"/><rect x="4.96" y="111.05" width="1.68" height="0.90" fill="#000" fill-opacity="0.36"/><rect x="70.23" y="110.51" width="1.00" height="2.12" fill="#000" fill-opacity="0.8"/><rect x="73.20" y="110.51" width="1.00" height="2.12" fill="#000" fill-opacity="0.8"/><rect x="71.10" y="111.05" width="2.23" height="0.90" fill="#000" fill-opacity="0.36"/><rect x="81.63" y="111.05" width="3.69" height="0.90" fill="#000" fill-opacity="0.36"/><rect x="4.29" y="43.96" width="81.44" height="1.00" fill="#000" fill-opacity="0.8"/><rect x="4.29" y="47.39" width="81.44" height="1.00" fill="#000" fill-opacity="0.8"/><rect x="4.29" y="49.57" width="81.44" height="1.00" fill="#000" fill-opacity="0.8"/><rect x="4.29" y="51.64" width="81.44" height="1.00" fill="#000" fill-opacity="0.8"/><rect x="4.29" y="53.80" width="81.44" height="1.00" fill="#000" fill-opacity="0.8"/><rect x="4.29" y="55.98" width="81.44" height="1.00" fill="#000" fill-opacity="0.8"/><rect x="4.29" y="58.15" width="81.44" height="1.00" fill="#000" fill-opacity="0.8"/><rect x="4.29" y="60.39" width="81.44" height="1.00" fill="#000" fill-opacity="0.8"/><rect x="4.29" y="62.80" width="81.44" height="1.00" fill="#000" fill-opacity="0.8"/><rect x="4.29" y="64.94" width="81.44" height="1.00" fill="#000" fill-opacity="0.8"/><rect x="4.29" y="67.03" width="81.44" height="1.00" fill="#000" fill-opacity="0.8"/><rect x="4.29" y="70.51" width="81.44" height="1.00" fill="#000" fill-opacity="0.8"/><rect x="4.29" y="72.71" width="81.44" height="1.00" fill="#000" fill-opacity="0.8"/><rect x="4.29" y="74.84" width="81.44" height="1.00" fill="#000" fill-opacity="0.8"/><rect x="4.29" y="76.91" width="81.44" height="1.00" fill="#000" fill-opacity="0.8"/><rect x="4.29" y="79.04" width="81.44" height="1.00" fill="#000" fill-opacity="0.8"/><rect x="4.29" y="82.46" width="81.44" height="1.00" fill="#000" fill-opacity="0.8"/><rect x="4.29" y="84.60" width="81.44" height="1.00" fill="#000" fill-opacity="0.8"/><rect x="4.29" y="86.73" width="81.44" height="1.00" fill="#000" fill-opacity="0.8"/><rect x="4.29" y="88.85" width="81.44" height="1.00" fill="#000" fill-opacity="0.8"/><rect x="4.29" y="90.94" width="81.44" height="1.00" fill="#000" fill-opacity="0.8"/><rect x="4.29" y="93.06" width="81.44" height="1.00" fill="#000" fill-opacity="0.8"/><rect x="4.29" y="95.18" width="81.44" height="1.00" fill="#000" fill-opacity="0.8"/><rect x="4.29" y="98.71" width="81.44" height="1.00" fill="#000" fill-opacity="0.8"/><rect x="4.29" y="102.24" width="81.44" height="1.00" fill="#000" fill-opacity="0.8"/><rect x="4.29" y="104.36" width="81.44" height="1.00" fill="#000" fill-opacity="0.8"/><rect x="4.29" y="107.89" width="81.44" height="1.00" fill="#000" fill-opacity="0.8"/><rect x="4.29" y="110.01" width="81.44" height="1.00" fill="#000" fill-opacity="0.8"/><rect x="4.29" y="112.13" width="81.44" height="1.00" fill="#000" fill-opacity="0.8"/><rect x="3.81" y="44.46" width="1.00" height="68.17" fill="#000" fill-opacity="0.8"/><rect x="85.22" y="44.46" width="1.00" height="68.17" fill="#000" fill-opacity="0.8"/><rect x="2.18" y="124.60" width="8.17" height="1.00" fill="#000" fill-opacity="0.8"/><rect x="87.21" y="124.56" width="0.41" height="0.90" fill="#000" fill-opacity="0.22"/></svg>
<div class="t" style="left:-275.00px;width:1200px;text-align:center;top:246.61px;font-size:10.5px;line-height:10.5px;font-family:'Liberation Sans',sans-serif;font-weight:normal;font-style:normal;color:#e8e8e8;">1</div>
<div class="r" style="left:279.90px;top:275.80px;width:90.20px;height:127.00px;background:#fff"></div>
<div class="r" style="left:284.00px;top:278.30px;width:58.00px;height:0.70px;background:#d0d0d0"></div>
<div class="r" style="left:284.00px;top:282.50px;width:16.00px;height:0.70px;background:#d6d6d6"></div>
<div class="r" style="left:284.00px;top:285.30px;width:6.00px;height:0.70px;background:#dadada"></div>
<div class="r" style="left:284.00px;top:287.50px;width:13.00px;height:0.70px;background:#d6d6d6"></div>
<div class="r" style="left:338.50px;top:281.00px;width:15.00px;height:0.70px;background:#d6d6d6"></div>
<div class="r" style="left:338.00px;top:283.00px;width:16.00px;height:0.70px;background:#d6d6d6"></div>
<div class="r" style="left:331.00px;top:285.30px;width:32.00px;height:0.80px;background:#b8b8b8"></div>
<div class="r" style="left:333.00px;top:287.50px;width:28.00px;height:0.70px;background:#d0d0d0"></div>
<div class="r" style="left:345.00px;top:295.00px;width:3.00px;height:0.60px;background:#ddd"></div>
<div class="r" style="left:285.00px;top:398.00px;width:18.00px;height:1.00px;background:#9a9a9a"></div>
<div class="r" style="left:363.00px;top:397.50px;width:3.00px;height:0.60px;background:#ddd"></div>
<div class="t" style="left:-275.00px;width:1200px;text-align:center;top:414.11px;font-size:10.5px;line-height:10.5px;font-family:'Liberation Sans',sans-serif;font-weight:normal;font-style:normal;color:#e8e8e8;">2</div>
<div class="r" style="left:588.0px;top:91.0px;width:661px;height:935px;background:#fff;overflow:hidden"><div class="t" style="left:175.00px;top:19.17px;font-size:12.33px;line-height:12.33px;font-family:'Liberation Serif',serif;font-weight:bold;font-style:normal;color:#000;">CỘNG HOÀ XÃ HỘI CHỦ NGHĨA VIỆT NAM</div>
<div class="t" style="left:244.00px;top:36.02px;font-size:9.65px;line-height:9.65px;font-family:'Liberation Serif',serif;font-weight:bold;font-style:normal;color:#000;transform:scaleY(0.93);transform-origin:0 8.08px;">Độc lập - Tự do - Hạnh phúc</div>
<div class="r" style="left:229.50px;top:49.00px;width:152.00px;height:1.00px;background:#000"></div>
<div class="t" style="left:192.60px;top:53.55px;font-size:13.19px;line-height:13.19px;font-family:'Liberation Serif',serif;font-weight:bold;font-style:normal;color:#000;">TỜ KHAI THUẾ GIÁ TRỊ GIA TĂNG</div>
<div class="t" style="left:117.70px;top:73.50px;font-size:9.55px;line-height:9.55px;font-family:'Liberation Serif',serif;font-weight:normal;font-style:italic;color:#000;transform:scaleY(0.93);transform-origin:0 8.00px;">(Áp dụng đối với người nộp thuế tính thuế theo phương pháp khấu trừ có hoạt động sản xuất kinh doanh)</div>
<div class="t" style="left:182.20px;top:90.05px;font-size:9.85px;line-height:9.85px;font-family:'Liberation Serif',serif;font-weight:bold;font-style:normal;color:#000;transform:scaleY(0.93);transform-origin:0 8.25px;">[01a] Tên hoạt động sản xuất kinh doanh: Hoạt động sản xuất kinh doanh thông thường</div>
<div class="t" style="left:181.20px;top:107.25px;font-size:9.85px;line-height:9.85px;font-family:'Liberation Serif',serif;font-weight:bold;font-style:normal;color:#000;transform:scaleY(0.93);transform-origin:0 8.25px;">[01b] Kỳ tính thuế: Tháng 11 năm 2025</div>
<div class="t" style="left:224.70px;top:123.05px;font-size:9.85px;line-height:9.85px;font-family:'Liberation Serif',serif;font-weight:bold;font-style:normal;color:#000;transform:scaleY(0.93);transform-origin:0 8.25px;">[02]</div>
<div class="t" style="left:243.70px;top:123.30px;font-size:9.55px;line-height:9.55px;font-family:'Liberation Serif',serif;font-weight:normal;font-style:normal;color:#000;transform:scaleY(0.93);transform-origin:0 8.00px;">Lần đầu</div>
<div class="r" style="left:292.80px;top:119.70px;width:25.60px;height:15.70px;border:1px solid #000"></div>
<div class="t" style="left:-294.40px;width:1200px;text-align:center;top:123.05px;font-size:9.85px;line-height:9.85px;font-family:'Liberation Serif',serif;font-weight:bold;font-style:normal;color:#000;transform:scaleY(0.93);transform-origin:0 8.25px;">X</div>
<div class="t" style="left:325.50px;top:123.05px;font-size:9.85px;line-height:9.85px;font-family:'Liberation Serif',serif;font-weight:bold;font-style:normal;color:#000;transform:scaleY(0.93);transform-origin:0 8.25px;">[03]</div>
<div class="t" style="left:344.60px;top:123.30px;font-size:9.55px;line-height:9.55px;font-family:'Liberation Serif',serif;font-weight:normal;font-style:normal;color:#000;transform:scaleY(0.93);transform-origin:0 8.00px;">Bổ sung lần thứ</div>
<div class="r" style="left:415.50px;top:119.40px;width:25.50px;height:16.00px;border:1px solid #000"></div>
<div class="r" style="left:465.00px;top:15.40px;width:165.40px;height:54.00px;border:1px solid #222"></div>
<div class="t" style="left:-52.00px;width:1200px;text-align:center;top:21.07px;font-size:9.47px;line-height:9.47px;font-family:'Liberation Serif',serif;font-weight:bold;font-style:normal;color:#000;transform:scaleY(0.93);transform-origin:0 7.93px;">Mẫu số: 01/GTGT</div>
<div class="t" style="left:-52.50px;width:1200px;text-align:center;top:35.77px;font-size:9.59px;line-height:9.59px;font-family:'Liberation Serif',serif;font-weight:normal;font-style:italic;color:#000;transform:scaleY(0.93);transform-origin:0 8.03px;">(Ban hành kèm theo Thông tư</div>
<div class="t" style="left:-52.50px;width:1200px;text-align:center;top:46.37px;font-size:9.59px;line-height:9.59px;font-family:'Liberation Serif',serif;font-weight:normal;font-style:italic;color:#000;transform:scaleY(0.93);transform-origin:0 8.03px;">số 80/2021/TT-BTC ngày 29/09/2021</div>
<div class="t" style="left:-52.50px;width:1200px;text-align:center;top:57.77px;font-size:9.59px;line-height:9.59px;font-family:'Liberation Serif',serif;font-weight:normal;font-style:italic;color:#000;transform:scaleY(0.93);transform-origin:0 8.03px;">của Bộ trưởng Bộ Tài chính)</div>
<div class="r" style="left:459.40px;top:12.00px;width:179.00px;height:64.00px;border:3px solid #e5121b;border-radius:3px"></div>
<div class="t" style="left:33.20px;top:142.25px;font-size:9.85px;line-height:9.85px;font-family:'Liberation Serif',serif;font-weight:bold;font-style:normal;color:#000;transform:scaleY(0.93);transform-origin:0 8.25px;">[04]</div>
<div class="t" style="left:54.90px;top:142.22px;font-size:9.89px;line-height:9.89px;font-family:'Liberation Serif',serif;font-weight:bold;font-style:normal;color:#000;transform:scaleY(0.93);transform-origin:0 8.28px;">Tên người nộp thuế: Công ty MISA 267- QC ASP test</div>
<div class="t" style="left:33.20px;top:160.35px;font-size:9.85px;line-height:9.85px;font-family:'Liberation Serif',serif;font-weight:bold;font-style:normal;color:#000;transform:scaleY(0.93);transform-origin:0 8.25px;">[05]</div>
<div class="t" style="left:54.90px;top:160.60px;font-size:9.55px;line-height:9.55px;font-family:'Liberation Serif',serif;font-weight:normal;font-style:normal;color:#000;transform:scaleY(0.93);transform-origin:0 8.00px;">Mã số thuế:</div>
<div class="t" style="left:33.20px;top:176.45px;font-size:9.85px;line-height:9.85px;font-family:'Liberation Serif',serif;font-weight:bold;font-style:normal;color:#000;transform:scaleY(0.93);transform-origin:0 8.25px;">[06]</div>
<div class="t" style="left:54.90px;top:176.45px;font-size:9.85px;line-height:9.85px;font-family:'Liberation Serif',serif;font-weight:bold;font-style:normal;color:#000;transform:scaleY(0.93);transform-origin:0 8.25px;">Tên đại lý nộp thuế (nếu có):</div>
<div class="t" style="left:33.20px;top:192.15px;font-size:9.85px;line-height:9.85px;font-family:'Liberation Serif',serif;font-weight:bold;font-style:normal;color:#000;transform:scaleY(0.93);transform-origin:0 8.25px;">[07]</div>
<div class="t" style="left:54.90px;top:192.40px;font-size:9.55px;line-height:9.55px;font-family:'Liberation Serif',serif;font-weight:normal;font-style:normal;color:#000;transform:scaleY(0.93);transform-origin:0 8.00px;">Mã số thuế:</div>
<div class="t" style="left:33.20px;top:208.55px;font-size:9.85px;line-height:9.85px;font-family:'Liberation Serif',serif;font-weight:bold;font-style:normal;color:#000;transform:scaleY(0.93);transform-origin:0 8.25px;">[08]</div>
<div class="t" style="left:54.90px;top:208.80px;font-size:9.55px;line-height:9.55px;font-family:'Liberation Serif',serif;font-weight:normal;font-style:normal;color:#000;transform:scaleY(0.93);transform-origin:0 8.00px;">Hợp đồng đại lý thuế: Số</div>
<div class="t" style="left:182.70px;top:208.80px;font-size:9.55px;line-height:9.55px;font-family:'Liberation Serif',serif;font-weight:normal;font-style:normal;color:#000;transform:scaleY(0.93);transform-origin:0 8.00px;">Ngày</div>
<div class="t" style="left:33.20px;top:225.85px;font-size:9.85px;line-height:9.85px;font-family:'Liberation Serif',serif;font-weight:bold;font-style:normal;color:#000;transform:scaleY(0.93);transform-origin:0 8.25px;">[09]</div>
<div class="t" style="left:54.90px;top:226.10px;font-size:9.55px;line-height:9.55px;font-family:'Liberation Serif',serif;font-weight:normal;font-style:normal;color:#000;transform:scaleY(0.93);transform-origin:0 8.00px;">Tên đơn vị phụ thuộc/địa điểm kinh doanh của hoạt động sản xuất kinh doanh khác tỉnh nơi đóng trụ sở chính:</div>
<div class="t" style="left:33.20px;top:243.05px;font-size:9.85px;line-height:9.85px;font-family:'Liberation Serif',serif;font-weight:bold;font-style:normal;color:#000;transform:scaleY(0.93);transform-origin:0 8.25px;">[10]</div>
<div class="t" style="left:54.90px;top:243.30px;font-size:9.55px;line-height:9.55px;font-family:'Liberation Serif',serif;font-weight:normal;font-style:normal;color:#000;transform:scaleY(0.93);transform-origin:0 8.00px;">Mã số thuế đơn vị phụ thuộc/Mã số địa điểm kinh doanh:</div>
<div class="t" style="left:33.20px;top:257.95px;font-size:9.85px;line-height:9.85px;font-family:'Liberation Serif',serif;font-weight:bold;font-style:normal;color:#000;transform:scaleY(0.93);transform-origin:0 8.25px;">[11]</div>
<div class="t" style="left:54.90px;top:258.20px;font-size:9.55px;line-height:9.55px;font-family:'Liberation Serif',serif;font-weight:normal;font-style:normal;color:#000;transform:scaleY(0.93);transform-origin:0 8.00px;">Địa chỉ nơi có hoạt động sản xuất kinh doanh khác tỉnh nơi đóng trụ sở chính:</div>
<div class="t" style="left:33.20px;top:277.25px;font-size:9.85px;line-height:9.85px;font-family:'Liberation Serif',serif;font-weight:bold;font-style:normal;color:#000;transform:scaleY(0.93);transform-origin:0 8.25px;">[11a]</div>
<div class="t" style="left:54.90px;top:277.50px;font-size:9.55px;line-height:9.55px;font-family:'Liberation Serif',serif;font-weight:normal;font-style:normal;color:#000;transform:scaleY(0.93);transform-origin:0 8.00px;">Xã/phường/đặc khu:</div>
<div class="t" style="left:221.80px;top:277.25px;font-size:9.85px;line-height:9.85px;font-family:'Liberation Serif',serif;font-weight:bold;font-style:normal;color:#000;transform:scaleY(0.93);transform-origin:0 8.25px;">[11b]</div>
<div class="t" style="left:246.60px;top:277.50px;font-size:9.55px;line-height:9.55px;font-family:'Liberation Serif',serif;font-weight:normal;font-style:normal;color:#000;transform:scaleY(0.93);transform-origin:0 8.00px;">Quận/huyện:</div>
<div class="t" style="left:438.60px;top:277.25px;font-size:9.85px;line-height:9.85px;font-family:'Liberation Serif',serif;font-weight:bold;font-style:normal;color:#000;transform:scaleY(0.93);transform-origin:0 8.25px;">[11c]</div>
<div class="t" style="left:463.90px;top:277.50px;font-size:9.55px;line-height:9.55px;font-family:'Liberation Serif',serif;font-weight:normal;font-style:normal;color:#000;transform:scaleY(0.93);transform-origin:0 8.00px;">Tỉnh/thành phố:</div>
<div class="t" style="left:519.90px;top:307.19px;font-size:9.57px;line-height:9.57px;font-family:'Liberation Serif',serif;font-weight:normal;font-style:italic;color:#000;transform:scaleY(0.93);transform-origin:0 8.01px;">Đơn vị tiền: Đồng Việt Nam</div>
<div class="r" style="left:141.70px;top:155.50px;width:252.30px;height:16.50px;border:1px solid #000"></div>
<div class="r" style="left:166.93px;top:155.50px;width:1.00px;height:16.50px;background:#000"></div>
<div class="r" style="left:192.16px;top:155.50px;width:1.00px;height:16.50px;background:#000"></div>
<div class="r" style="left:217.39px;top:155.50px;width:1.00px;height:16.50px;background:#000"></div>
<div class="r" style="left:242.62px;top:155.50px;width:1.00px;height:16.50px;background:#000"></div>
<div class="r" style="left:267.85px;top:155.50px;width:1.00px;height:16.50px;background:#000"></div>
<div class="r" style="left:293.08px;top:155.50px;width:1.00px;height:16.50px;background:#000"></div>
<div class="r" style="left:318.31px;top:155.50px;width:1.00px;height:16.50px;background:#000"></div>
<div class="r" style="left:343.54px;top:155.50px;width:1.00px;height:16.50px;background:#000"></div>
<div class="r" style="left:368.77px;top:155.50px;width:1.00px;height:16.50px;background:#000"></div>
<div class="r" style="left:415.20px;top:155.50px;width:76.40px;height:16.50px;border:1px solid #000"></div>
<div class="r" style="left:440.67px;top:155.50px;width:1.00px;height:16.50px;background:#000"></div>
<div class="r" style="left:466.13px;top:155.50px;width:1.00px;height:16.50px;background:#000"></div>
<div class="t" style="left:-196.40px;width:1200px;text-align:center;top:160.50px;font-size:9.55px;line-height:9.55px;font-family:'Liberation Serif',serif;font-weight:normal;font-style:normal;color:#000;transform:scaleY(0.93);transform-origin:0 8.00px;">-</div>
<div class="t" style="left:-445.68px;width:1200px;text-align:center;top:159.30px;font-size:9.55px;line-height:9.55px;font-family:'Liberation Serif',serif;font-weight:normal;font-style:normal;color:#000;transform:scaleY(0.93);transform-origin:0 8.00px;">0</div>
<div class="t" style="left:-420.45px;width:1200px;text-align:center;top:159.30px;font-size:9.55px;line-height:9.55px;font-family:'Liberation Serif',serif;font-weight:normal;font-style:normal;color:#000;transform:scaleY(0.93);transform-origin:0 8.00px;">1</div>
<div class="t" style="left:-395.22px;width:1200px;text-align:center;top:159.30px;font-size:9.55px;line-height:9.55px;font-family:'Liberation Serif',serif;font-weight:normal;font-style:normal;color:#000;transform:scaleY(0.93);transform-origin:0 8.00px;">0</div>
<div class="t" style="left:-370.00px;width:1200px;text-align:center;top:159.30px;font-size:9.55px;line-height:9.55px;font-family:'Liberation Serif',serif;font-weight:normal;font-style:normal;color:#000;transform:scaleY(0.93);transform-origin:0 8.00px;">1</div>
<div class="t" style="left:-344.76px;width:1200px;text-align:center;top:159.30px;font-size:9.55px;line-height:9.55px;font-family:'Liberation Serif',serif;font-weight:normal;font-style:normal;color:#000;transform:scaleY(0.93);transform-origin:0 8.00px;">2</div>
<div class="t" style="left:-319.53px;width:1200px;text-align:center;top:159.30px;font-size:9.55px;line-height:9.55px;font-family:'Liberation Serif',serif;font-weight:normal;font-style:normal;color:#000;transform:scaleY(0.93);transform-origin:0 8.00px;">4</div>
<div class="t" style="left:-294.30px;width:1200px;text-align:center;top:159.30px;font-size:9.55px;line-height:9.55px;font-family:'Liberation Serif',serif;font-weight:normal;font-style:normal;color:#000;transform:scaleY(0.93);transform-origin:0 8.00px;">3</div>
<div class="t" style="left:-269.08px;width:1200px;text-align:center;top:159.30px;font-size:9.55px;line-height:9.55px;font-family:'Liberation Serif',serif;font-weight:normal;font-style:normal;color:#000;transform:scaleY(0.93);transform-origin:0 8.00px;">1</div>
<div class="t" style="left:-243.85px;width:1200px;text-align:center;top:159.30px;font-size:9.55px;line-height:9.55px;font-family:'Liberation Serif',serif;font-weight:normal;font-style:normal;color:#000;transform:scaleY(0.93);transform-origin:0 8.00px;">5</div>
<div class="t" style="left:-218.62px;width:1200px;text-align:center;top:159.30px;font-size:9.55px;line-height:9.55px;font-family:'Liberation Serif',serif;font-weight:normal;font-style:normal;color:#000;transform:scaleY(0.93);transform-origin:0 8.00px;">0</div>
<div class="t" style="left:-172.07px;width:1200px;text-align:center;top:159.30px;font-size:9.55px;line-height:9.55px;font-family:'Liberation Serif',serif;font-weight:normal;font-style:normal;color:#000;transform:scaleY(0.93);transform-origin:0 8.00px;">1</div>
<div class="t" style="left:-146.60px;width:1200px;text-align:center;top:159.30px;font-size:9.55px;line-height:9.55px;font-family:'Liberation Serif',serif;font-weight:normal;font-style:normal;color:#000;transform:scaleY(0.93);transform-origin:0 8.00px;">3</div>
<div class="t" style="left:-121.13px;width:1200px;text-align:center;top:159.30px;font-size:9.55px;line-height:9.55px;font-family:'Liberation Serif',serif;font-weight:normal;font-style:normal;color:#000;transform:scaleY(0.93);transform-origin:0 8.00px;">6</div>
<div class="r" style="left:141.70px;top:188.20px;width:252.30px;height:16.80px;border:1px solid #000"></div>
<div class="r" style="left:166.93px;top:188.20px;width:1.00px;height:16.80px;background:#000"></div>
<div class="r" style="left:192.16px;top:188.20px;width:1.00px;height:16.80px;background:#000"></div>
<div class="r" style="left:217.39px;top:188.20px;width:1.00px;height:16.80px;background:#000"></div>
<div class="r" style="left:242.62px;top:188.20px;width:1.00px;height:16.80px;background:#000"></div>
<div class="r" style="left:267.85px;top:188.20px;width:1.00px;height:16.80px;background:#000"></div>
<div class="r" style="left:293.08px;top:188.20px;width:1.00px;height:16.80px;background:#000"></div>
<div class="r" style="left:318.31px;top:188.20px;width:1.00px;height:16.80px;background:#000"></div>
<div class="r" style="left:343.54px;top:188.20px;width:1.00px;height:16.80px;background:#000"></div>
<div class="r" style="left:368.77px;top:188.20px;width:1.00px;height:16.80px;background:#000"></div>
<div class="r" style="left:415.20px;top:188.20px;width:76.40px;height:16.80px;border:1px solid #000"></div>
<div class="r" style="left:440.67px;top:188.20px;width:1.00px;height:16.80px;background:#000"></div>
<div class="r" style="left:466.13px;top:188.20px;width:1.00px;height:16.80px;background:#000"></div>
<div class="t" style="left:-196.40px;width:1200px;text-align:center;top:193.50px;font-size:9.55px;line-height:9.55px;font-family:'Liberation Serif',serif;font-weight:normal;font-style:normal;color:#000;transform:scaleY(0.93);transform-origin:0 8.00px;">-</div>
<div class="r" style="left:31.50px;top:327.30px;width:598.10px;height:25.30px;background:#d4d4d4"></div>
<div class="t" style="left:-557.40px;width:1200px;text-align:center;top:335.55px;font-size:9.85px;line-height:9.85px;font-family:'Liberation Serif',serif;font-weight:bold;font-style:normal;color:#000;transform:scaleY(0.93);transform-origin:0 8.25px;">STT</div>
<div class="t" style="left:-366.00px;width:1200px;text-align:center;top:335.55px;font-size:9.85px;line-height:9.85px;font-family:'Liberation Serif',serif;font-weight:bold;font-style:normal;color:#000;transform:scaleY(0.93);transform-origin:0 8.25px;">Chỉ tiêu</div>
<div class="t" style="left:-132.40px;width:1200px;text-align:center;top:330.15px;font-size:9.85px;line-height:9.85px;font-family:'Liberation Serif',serif;font-weight:bold;font-style:normal;color:#000;transform:scaleY(0.93);transform-origin:0 8.25px;">Giá trị HHDV</div>
<div class="t" style="left:-132.40px;width:1200px;text-align:center;top:340.55px;font-size:9.85px;line-height:9.85px;font-family:'Liberation Serif',serif;font-weight:bold;font-style:normal;color:#000;transform:scaleY(0.93);transform-origin:0 8.25px;">(Chưa có thuế GTGT)</div>
<div class="t" style="left:-25.45px;width:1200px;text-align:center;top:335.55px;font-size:9.85px;line-height:9.85px;font-family:'Liberation Serif',serif;font-weight:bold;font-style:normal;color:#000;transform:scaleY(0.93);transform-origin:0 8.25px;">Thuế GTGT</div>
<div class="r" style="left:53.20px;top:327.30px;width:1.00px;height:25.30px;background:#2a2a2a"></div>
<div class="r" style="left:415.20px;top:327.30px;width:1.00px;height:25.30px;background:#2a2a2a"></div>
<div class="r" style="left:519.00px;top:327.30px;width:1.00px;height:25.30px;background:#2a2a2a"></div>
<div class="t" style="left:55.20px;top:355.65px;font-size:9.85px;line-height:9.85px;font-family:'Liberation Serif',serif;font-weight:bold;font-style:normal;color:#000;transform:scaleY(0.93);transform-origin:0 8.25px;">Không phát sinh hoạt động mua bán trong kỳ (đánh dấu "X")</div>
<div class="r" style="left:53.20px;top:352.60px;width:1.00px;height:16.00px;background:#2a2a2a"></div>
<div class="t" style="left:-557.40px;width:1200px;text-align:center;top:355.65px;font-size:9.85px;line-height:9.85px;font-family:'Liberation Serif',serif;font-weight:bold;font-style:normal;color:#000;transform:scaleY(0.93);transform-origin:0 8.25px;">A</div>
<div class="r" style="left:393.50px;top:352.60px;width:1.00px;height:16.00px;background:#2a2a2a"></div>
<div class="r" style="left:415.20px;top:352.60px;width:1.00px;height:16.00px;background:#2a2a2a"></div>
<div class="r" style="left:519.00px;top:352.60px;width:1.00px;height:16.00px;background:#2a2a2a"></div>
<div class="t" style="left:-196.15px;width:1200px;text-align:center;top:355.90px;font-size:9.55px;line-height:9.55px;font-family:'Liberation Serif',serif;font-weight:normal;font-style:normal;color:#000;transform:scaleY(0.93);transform-origin:0 8.00px;">[21]</div>
<div class="t" style="left:55.20px;top:371.65px;font-size:9.85px;line-height:9.85px;font-family:'Liberation Serif',serif;font-weight:bold;font-style:normal;color:#000;transform:scaleY(0.93);transform-origin:0 8.25px;">Thuế giá trị gia tăng còn được khấu trừ kỳ trước chuyển sang</div>
<div class="r" style="left:53.20px;top:368.60px;width:1.00px;height:15.30px;background:#2a2a2a"></div>
<div class="t" style="left:-557.40px;width:1200px;text-align:center;top:371.65px;font-size:9.85px;line-height:9.85px;font-family:'Liberation Serif',serif;font-weight:bold;font-style:normal;color:#000;transform:scaleY(0.93);transform-origin:0 8.25px;">B</div>
<div class="r" style="left:519.00px;top:368.60px;width:1.00px;height:15.30px;background:#2a2a2a"></div>
<div class="r" style="left:540.80px;top:368.60px;width:1.00px;height:15.30px;background:#2a2a2a"></div>
<div class="t" style="left:-69.60px;width:1200px;text-align:center;top:371.90px;font-size:9.55px;line-height:9.55px;font-family:'Liberation Serif',serif;font-weight:normal;font-style:normal;color:#000;transform:scaleY(0.93);transform-origin:0 8.00px;">[22]</div>
<div class="t" style="left:55.20px;top:386.95px;font-size:9.85px;line-height:9.85px;font-family:'Liberation Serif',serif;font-weight:bold;font-style:normal;color:#000;transform:scaleY(0.93);transform-origin:0 8.25px;">Kê khai thuế giá trị gia tăng phải nộp Ngân sách nhà nước</div>
<div class="r" style="left:53.20px;top:383.90px;width:1.00px;height:15.90px;background:#2a2a2a"></div>
<div class="t" style="left:-557.40px;width:1200px;text-align:center;top:386.95px;font-size:9.85px;line-height:9.85px;font-family:'Liberation Serif',serif;font-weight:bold;font-style:normal;color:#000;transform:scaleY(0.93);transform-origin:0 8.25px;">C</div>
<div class="t" style="left:55.20px;top:402.85px;font-size:9.85px;line-height:9.85px;font-family:'Liberation Serif',serif;font-weight:bold;font-style:normal;color:#000;transform:scaleY(0.93);transform-origin:0 8.25px;">Hàng hóa, dịch vụ (HHDV) mua vào trong kỳ</div>
<div class="r" style="left:53.20px;top:399.80px;width:1.00px;height:16.00px;background:#2a2a2a"></div>
<div class="t" style="left:-557.40px;width:1200px;text-align:center;top:402.85px;font-size:9.85px;line-height:9.85px;font-family:'Liberation Serif',serif;font-weight:bold;font-style:normal;color:#000;transform:scaleY(0.93);transform-origin:0 8.25px;">I</div>
<div class="t" style="left:55.20px;top:418.85px;font-size:9.85px;line-height:9.85px;font-family:'Liberation Serif',serif;font-weight:bold;font-style:normal;color:#000;transform:scaleY(0.93);transform-origin:0 8.25px;">Giá trị và thuế giá trị gia tăng của hàng hoá, dịch vụ mua vào</div>
<div class="r" style="left:53.20px;top:415.80px;width:1.00px;height:16.00px;background:#2a2a2a"></div>
<div class="t" style="left:-557.40px;width:1200px;text-align:center;top:418.85px;font-size:9.85px;line-height:9.85px;font-family:'Liberation Serif',serif;font-weight:bold;font-style:normal;color:#000;transform:scaleY(0.93);transform-origin:0 8.25px;">1</div>
<div class="r" style="left:393.50px;top:415.80px;width:1.00px;height:16.00px;background:#2a2a2a"></div>
<div class="r" style="left:415.20px;top:415.80px;width:1.00px;height:16.00px;background:#2a2a2a"></div>
<div class="r" style="left:519.00px;top:415.80px;width:1.00px;height:16.00px;background:#2a2a2a"></div>
<div class="r" style="left:540.80px;top:415.80px;width:1.00px;height:16.00px;background:#2a2a2a"></div>
<div class="t" style="left:-196.15px;width:1200px;text-align:center;top:418.85px;font-size:9.85px;line-height:9.85px;font-family:'Liberation Serif',serif;font-weight:bold;font-style:normal;color:#000;transform:scaleY(0.93);transform-origin:0 8.25px;">[23]</div>
<div class="t" style="left:-683.50px;width:1200px;text-align:right;top:418.85px;font-size:9.85px;line-height:9.85px;font-family:'Liberation Serif',serif;font-weight:bold;font-style:normal;color:#000;transform:scaleY(0.93);transform-origin:0 8.25px;">2.715.714</div>
<div class="t" style="left:-69.60px;width:1200px;text-align:center;top:418.85px;font-size:9.85px;line-height:9.85px;font-family:'Liberation Serif',serif;font-weight:bold;font-style:normal;color:#000;transform:scaleY(0.93);transform-origin:0 8.25px;">[24]</div>
<div class="t" style="left:-573.40px;width:1200px;text-align:right;top:418.85px;font-size:9.85px;line-height:9.85px;font-family:'Liberation Serif',serif;font-weight:bold;font-style:normal;color:#000;transform:scaleY(0.93);transform-origin:0 8.25px;">120.286</div>
<div class="t" style="left:55.20px;top:435.10px;font-size:9.55px;line-height:9.55px;font-family:'Liberation Serif',serif;font-weight:normal;font-style:normal;color:#000;transform:scaleY(0.93);transform-origin:0 8.00px;">Trong đó: hàng hóa, dịch vụ nhập khẩu</div>
<div class="r" style="left:53.20px;top:431.80px;width:1.00px;height:16.50px;background:#2a2a2a"></div>
<div class="r" style="left:393.50px;top:431.80px;width:1.00px;height:16.50px;background:#2a2a2a"></div>
<div class="r" style="left:415.20px;top:431.80px;width:1.00px;height:16.50px;background:#2a2a2a"></div>
<div class="r" style="left:519.00px;top:431.80px;width:1.00px;height:16.50px;background:#2a2a2a"></div>
<div class="r" style="left:540.80px;top:431.80px;width:1.00px;height:16.50px;background:#2a2a2a"></div>
<div class="t" style="left:-196.15px;width:1200px;text-align:center;top:435.10px;font-size:9.55px;line-height:9.55px;font-family:'Liberation Serif',serif;font-weight:normal;font-style:normal;color:#000;transform:scaleY(0.93);transform-origin:0 8.00px;">[23a]</div>
<div class="t" style="left:-69.60px;width:1200px;text-align:center;top:435.10px;font-size:9.55px;line-height:9.55px;font-family:'Liberation Serif',serif;font-weight:normal;font-style:normal;color:#000;transform:scaleY(0.93);transform-origin:0 8.00px;">[24a]</div>
<div class="t" style="left:55.20px;top:451.35px;font-size:9.85px;line-height:9.85px;font-family:'Liberation Serif',serif;font-weight:bold;font-style:normal;color:#000;transform:scaleY(0.93);transform-origin:0 8.25px;">Thuế giá trị gia tăng của hàng hóa, dịch vụ mua vào được khấu trừ kỳ này</div>
<div class="r" style="left:53.20px;top:448.30px;width:1.00px;height:17.70px;background:#2a2a2a"></div>
<div class="t" style="left:-557.40px;width:1200px;text-align:center;top:451.35px;font-size:9.85px;line-height:9.85px;font-family:'Liberation Serif',serif;font-weight:bold;font-style:normal;color:#000;transform:scaleY(0.93);transform-origin:0 8.25px;">2</div>
<div class="r" style="left:519.00px;top:448.30px;width:1.00px;height:17.70px;background:#2a2a2a"></div>
<div class="r" style="left:540.80px;top:448.30px;width:1.00px;height:17.70px;background:#2a2a2a"></div>
<div class="t" style="left:-69.60px;width:1200px;text-align:center;top:451.35px;font-size:9.85px;line-height:9.85px;font-family:'Liberation Serif',serif;font-weight:bold;font-style:normal;color:#000;transform:scaleY(0.93);transform-origin:0 8.25px;">[25]</div>
<div class="t" style="left:-573.40px;width:1200px;text-align:right;top:451.35px;font-size:9.85px;line-height:9.85px;font-family:'Liberation Serif',serif;font-weight:bold;font-style:normal;color:#000;transform:scaleY(0.93);transform-origin:0 8.25px;">120.286</div>
<div class="t" style="left:55.20px;top:469.05px;font-size:9.85px;line-height:9.85px;font-family:'Liberation Serif',serif;font-weight:bold;font-style:normal;color:#000;transform:scaleY(0.93);transform-origin:0 8.25px;">Hàng hóa, dịch vụ bán ra trong kỳ</div>
<div class="r" style="left:53.20px;top:466.00px;width:1.00px;height:15.80px;background:#2a2a2a"></div>
<div class="t" style="left:-557.40px;width:1200px;text-align:center;top:469.05px;font-size:9.85px;line-height:9.85px;font-family:'Liberation Serif',serif;font-weight:bold;font-style:normal;color:#000;transform:scaleY(0.93);transform-origin:0 8.25px;">II</div>
<div class="t" style="left:55.20px;top:484.85px;font-size:9.85px;line-height:9.85px;font-family:'Liberation Serif',serif;font-weight:bold;font-style:normal;color:#000;transform:scaleY(0.93);transform-origin:0 8.25px;">Hàng hóa, dịch vụ bán ra không chịu thuế giá trị gia tăng</div>
<div class="r" style="left:53.20px;top:481.80px;width:1.00px;height:15.40px;background:#2a2a2a"></div>
<div class="t" style="left:-557.40px;width:1200px;text-align:center;top:484.85px;font-size:9.85px;line-height:9.85px;font-family:'Liberation Serif',serif;font-weight:bold;font-style:normal;color:#000;transform:scaleY(0.93);transform-origin:0 8.25px;">1</div>
<div class="r" style="left:393.50px;top:481.80px;width:1.00px;height:15.40px;background:#2a2a2a"></div>
<div class="r" style="left:415.20px;top:481.80px;width:1.00px;height:15.40px;background:#2a2a2a"></div>
<div class="r" style="left:519.00px;top:481.80px;width:1.00px;height:15.40px;background:#2a2a2a"></div>
<div class="t" style="left:-196.15px;width:1200px;text-align:center;top:484.85px;font-size:9.85px;line-height:9.85px;font-family:'Liberation Serif',serif;font-weight:bold;font-style:normal;color:#000;transform:scaleY(0.93);transform-origin:0 8.25px;">[26]</div>
<div class="t" style="left:55.20px;top:500.05px;font-size:9.85px;line-height:9.85px;font-family:'Liberation Serif',serif;font-weight:bold;font-style:normal;color:#000;transform:scaleY(0.93);transform-origin:0 8.25px;">Hàng hóa, dịch vụ bán ra chịu thuế giá trị gia tăng ([27]= [29]+[30]+[32]+[32a];</div>
<div class="t" style="left:55.20px;top:510.35px;font-size:9.85px;line-height:9.85px;font-family:'Liberation Serif',serif;font-weight:bold;font-style:normal;color:#000;transform:scaleY(0.93);transform-origin:0 8.25px;">[28]= [31]+[33])</div>
<div class="r" style="left:53.20px;top:497.20px;width:1.00px;height:25.60px;background:#2a2a2a"></div>
<div class="t" style="left:-557.40px;width:1200px;text-align:center;top:505.55px;font-size:9.85px;line-height:9.85px;font-family:'Liberation Serif',serif;font-weight:bold;font-style:normal;color:#000;transform:scaleY(0.93);transform-origin:0 8.25px;">2</div>
<div class="r" style="left:393.50px;top:497.20px;width:1.00px;height:25.60px;background:#2a2a2a"></div>
<div class="r" style="left:415.20px;top:497.20px;width:1.00px;height:25.60px;background:#2a2a2a"></div>
<div class="r" style="left:519.00px;top:497.20px;width:1.00px;height:25.60px;background:#2a2a2a"></div>
<div class="r" style="left:540.80px;top:497.20px;width:1.00px;height:25.60px;background:#2a2a2a"></div>
<div class="t" style="left:-196.15px;width:1200px;text-align:center;top:505.55px;font-size:9.85px;line-height:9.85px;font-family:'Liberation Serif',serif;font-weight:bold;font-style:normal;color:#000;transform:scaleY(0.93);transform-origin:0 8.25px;">[27]</div>
<div class="t" style="left:-683.50px;width:1200px;text-align:right;top:505.55px;font-size:9.85px;line-height:9.85px;font-family:'Liberation Serif',serif;font-weight:bold;font-style:normal;color:#000;transform:scaleY(0.93);transform-origin:0 8.25px;">933.333</div>
<div class="t" style="left:-69.60px;width:1200px;text-align:center;top:505.55px;font-size:9.85px;line-height:9.85px;font-family:'Liberation Serif',serif;font-weight:bold;font-style:normal;color:#000;transform:scaleY(0.93);transform-origin:0 8.25px;">[28]</div>
<div class="t" style="left:-573.40px;width:1200px;text-align:right;top:505.55px;font-size:9.85px;line-height:9.85px;font-family:'Liberation Serif',serif;font-weight:bold;font-style:normal;color:#000;transform:scaleY(0.93);transform-origin:0 8.25px;">74.667</div>
<div class="t" style="left:55.20px;top:526.10px;font-size:9.55px;line-height:9.55px;font-family:'Liberation Serif',serif;font-weight:normal;font-style:normal;color:#000;transform:scaleY(0.93);transform-origin:0 8.00px;">Hàng hóa, dịch vụ bán ra chịu thuế suất 0%</div>
<div class="r" style="left:53.20px;top:522.80px;width:1.00px;height:16.20px;background:#2a2a2a"></div>
<div class="t" style="left:-557.40px;width:1200px;text-align:center;top:525.85px;font-size:9.85px;line-height:9.85px;font-family:'Liberation Serif',serif;font-weight:bold;font-style:normal;color:#000;transform:scaleY(0.93);transform-origin:0 8.25px;">a</div>
<div class="r" style="left:393.50px;top:522.80px;width:1.00px;height:16.20px;background:#2a2a2a"></div>
<div class="r" style="left:415.20px;top:522.80px;width:1.00px;height:16.20px;background:#2a2a2a"></div>
<div class="r" style="left:519.00px;top:522.80px;width:1.00px;height:16.20px;background:#2a2a2a"></div>
<div class="r" style="left:540.80px;top:522.80px;width:1.00px;height:16.20px;background:#2a2a2a"></div>
<div class="t" style="left:-196.15px;width:1200px;text-align:center;top:526.10px;font-size:9.55px;line-height:9.55px;font-family:'Liberation Serif',serif;font-weight:normal;font-style:normal;color:#000;transform:scaleY(0.93);transform-origin:0 8.00px;">[29]</div>
<div class="t" style="left:55.20px;top:542.30px;font-size:9.55px;line-height:9.55px;font-family:'Liberation Serif',serif;font-weight:normal;font-style:normal;color:#000;transform:scaleY(0.93);transform-origin:0 8.00px;">Hàng hóa, dịch vụ bán ra chịu thuế suất 5%</div>
<div class="r" style="left:53.20px;top:539.00px;width:1.00px;height:15.70px;background:#2a2a2a"></div>
<div class="t" style="left:-557.40px;width:1200px;text-align:center;top:542.05px;font-size:9.85px;line-height:9.85px;font-family:'Liberation Serif',serif;font-weight:bold;font-style:normal;color:#000;transform:scaleY(0.93);transform-origin:0 8.25px;">b</div>
<div class="r" style="left:393.50px;top:539.00px;width:1.00px;height:15.70px;background:#2a2a2a"></div>
<div class="r" style="left:415.20px;top:539.00px;width:1.00px;height:15.70px;background:#2a2a2a"></div>
<div class="r" style="left:519.00px;top:539.00px;width:1.00px;height:15.70px;background:#2a2a2a"></div>
<div class="r" style="left:540.80px;top:539.00px;width:1.00px;height:15.70px;background:#2a2a2a"></div>
<div class="t" style="left:-196.15px;width:1200px;text-align:center;top:542.30px;font-size:9.55px;line-height:9.55px;font-family:'Liberation Serif',serif;font-weight:normal;font-style:normal;color:#000;transform:scaleY(0.93);transform-origin:0 8.00px;">[30]</div>
<div class="t" style="left:-69.60px;width:1200px;text-align:center;top:542.30px;font-size:9.55px;line-height:9.55px;font-family:'Liberation Serif',serif;font-weight:normal;font-style:normal;color:#000;transform:scaleY(0.93);transform-origin:0 8.00px;">[31]</div>
<div class="t" style="left:55.20px;top:558.00px;font-size:9.55px;line-height:9.55px;font-family:'Liberation Serif',serif;font-weight:normal;font-style:normal;color:#000;transform:scaleY(0.93);transform-origin:0 8.00px;">Hàng hóa, dịch vụ bán ra chịu thuế suất 10%</div>
<div class="r" style="left:53.20px;top:554.70px;width:1.00px;height:15.20px;background:#2a2a2a"></div>
<div class="t" style="left:-557.40px;width:1200px;text-align:center;top:557.75px;font-size:9.85px;line-height:9.85px;font-family:'Liberation Serif',serif;font-weight:bold;font-style:normal;color:#000;transform:scaleY(0.93);transform-origin:0 8.25px;">c</div>
<div class="r" style="left:393.50px;top:554.70px;width:1.00px;height:15.20px;background:#2a2a2a"></div>
<div class="r" style="left:415.20px;top:554.70px;width:1.00px;height:15.20px;background:#2a2a2a"></div>
<div class="r" style="left:519.00px;top:554.70px;width:1.00px;height:15.20px;background:#2a2a2a"></div>
<div class="r" style="left:540.80px;top:554.70px;width:1.00px;height:15.20px;background:#2a2a2a"></div>
<div class="t" style="left:-196.15px;width:1200px;text-align:center;top:558.00px;font-size:9.55px;line-height:9.55px;font-family:'Liberation Serif',serif;font-weight:normal;font-style:normal;color:#000;transform:scaleY(0.93);transform-origin:0 8.00px;">[32]</div>
<div class="t" style="left:-683.50px;width:1200px;text-align:right;top:558.00px;font-size:9.55px;line-height:9.55px;font-family:'Liberation Serif',serif;font-weight:normal;font-style:normal;color:#000;transform:scaleY(0.93);transform-origin:0 8.00px;">933.333</div>
<div class="t" style="left:-69.60px;width:1200px;text-align:center;top:558.00px;font-size:9.55px;line-height:9.55px;font-family:'Liberation Serif',serif;font-weight:normal;font-style:normal;color:#000;transform:scaleY(0.93);transform-origin:0 8.00px;">[33]</div>
<div class="t" style="left:-573.40px;width:1200px;text-align:right;top:558.00px;font-size:9.55px;line-height:9.55px;font-family:'Liberation Serif',serif;font-weight:normal;font-style:normal;color:#000;transform:scaleY(0.93);transform-origin:0 8.00px;">74.667</div>
<div class="t" style="left:55.20px;top:573.20px;font-size:9.55px;line-height:9.55px;font-family:'Liberation Serif',serif;font-weight:normal;font-style:normal;color:#000;transform:scaleY(0.93);transform-origin:0 8.00px;">Hàng hóa, dịch vụ bán ra không tính thuế</div>
<div class="r" style="left:53.20px;top:569.90px;width:1.00px;height:15.70px;background:#2a2a2a"></div>
<div class="t" style="left:-557.40px;width:1200px;text-align:center;top:572.95px;font-size:9.85px;line-height:9.85px;font-family:'Liberation Serif',serif;font-weight:bold;font-style:normal;color:#000;transform:scaleY(0.93);transform-origin:0 8.25px;">d</div>
<div class="r" style="left:393.50px;top:569.90px;width:1.00px;height:15.70px;background:#2a2a2a"></div>
<div class="r" style="left:415.20px;top:569.90px;width:1.00px;height:15.70px;background:#2a2a2a"></div>
<div class="r" style="left:519.00px;top:569.90px;width:1.00px;height:15.70px;background:#2a2a2a"></div>
<div class="r" style="left:540.80px;top:569.90px;width:1.00px;height:15.70px;background:#2a2a2a"></div>
<div class="t" style="left:-196.15px;width:1200px;text-align:center;top:573.20px;font-size:9.55px;line-height:9.55px;font-family:'Liberation Serif',serif;font-weight:normal;font-style:normal;color:#000;transform:scaleY(0.93);transform-origin:0 8.00px;">[32a]</div>
<div class="t" style="left:55.20px;top:588.45px;font-size:9.85px;line-height:9.85px;font-family:'Liberation Serif',serif;font-weight:bold;font-style:normal;color:#000;transform:scaleY(0.93);transform-origin:0 8.25px;">Tổng doanh thu và thuế giá trị gia tăng của hàng hóa, dịch vụ bán ra ([34] = [26]</div>
<div class="t" style="left:55.20px;top:598.75px;font-size:9.85px;line-height:9.85px;font-family:'Liberation Serif',serif;font-weight:bold;font-style:normal;color:#000;transform:scaleY(0.93);transform-origin:0 8.25px;">+ [27]; [35] = [28])</div>
<div class="r" style="left:53.20px;top:585.60px;width:1.00px;height:25.20px;background:#2a2a2a"></div>
<div class="t" style="left:-557.40px;width:1200px;text-align:center;top:593.95px;font-size:9.85px;line-height:9.85px;font-family:'Liberation Serif',serif;font-weight:bold;font-style:normal;color:#000;transform:scaleY(0.93);transform-origin:0 8.25px;">3</div>
<div class="r" style="left:393.50px;top:585.60px;width:1.00px;height:25.20px;background:#2a2a2a"></div>
<div class="r" style="left:415.20px;top:585.60px;width:1.00px;height:25.20px;background:#2a2a2a"></div>
<div class="r" style="left:519.00px;top:585.60px;width:1.00px;height:25.20px;background:#2a2a2a"></div>
<div class="r" style="left:540.80px;top:585.60px;width:1.00px;height:25.20px;background:#2a2a2a"></div>
<div class="t" style="left:-196.15px;width:1200px;text-align:center;top:593.95px;font-size:9.85px;line-height:9.85px;font-family:'Liberation Serif',serif;font-weight:bold;font-style:normal;color:#000;transform:scaleY(0.93);transform-origin:0 8.25px;">[34]</div>
<div class="t" style="left:-683.50px;width:1200px;text-align:right;top:593.95px;font-size:9.85px;line-height:9.85px;font-family:'Liberation Serif',serif;font-weight:bold;font-style:normal;color:#000;transform:scaleY(0.93);transform-origin:0 8.25px;">933.333</div>
<div class="t" style="left:-69.60px;width:1200px;text-align:center;top:593.95px;font-size:9.85px;line-height:9.85px;font-family:'Liberation Serif',serif;font-weight:bold;font-style:normal;color:#000;transform:scaleY(0.93);transform-origin:0 8.25px;">[35]</div>
<div class="t" style="left:-573.40px;width:1200px;text-align:right;top:593.95px;font-size:9.85px;line-height:9.85px;font-family:'Liberation Serif',serif;font-weight:bold;font-style:normal;color:#000;transform:scaleY(0.93);transform-origin:0 8.25px;">74.667</div>
<div class="t" style="left:55.20px;top:613.85px;font-size:9.85px;line-height:9.85px;font-family:'Liberation Serif',serif;font-weight:bold;font-style:normal;color:#000;transform:scaleY(0.93);transform-origin:0 8.25px;">Thuế giá trị gia tăng phát sinh trong kỳ ([36] = [35] - [25])</div>
<div class="r" style="left:53.20px;top:610.80px;width:1.00px;height:15.70px;background:#2a2a2a"></div>
<div class="t" style="left:-557.40px;width:1200px;text-align:center;top:613.85px;font-size:9.85px;line-height:9.85px;font-family:'Liberation Serif',serif;font-weight:bold;font-style:normal;color:#000;transform:scaleY(0.93);transform-origin:0 8.25px;">III</div>
<div class="r" style="left:519.00px;top:610.80px;width:1.00px;height:15.70px;background:#2a2a2a"></div>
<div class="r" style="left:540.80px;top:610.80px;width:1.00px;height:15.70px;background:#2a2a2a"></div>
<div class="t" style="left:-69.60px;width:1200px;text-align:center;top:613.85px;font-size:9.85px;line-height:9.85px;font-family:'Liberation Serif',serif;font-weight:bold;font-style:normal;color:#000;transform:scaleY(0.93);transform-origin:0 8.25px;">[36]</div>
<div class="t" style="left:-573.40px;width:1200px;text-align:right;top:613.85px;font-size:9.85px;line-height:9.85px;font-family:'Liberation Serif',serif;font-weight:bold;font-style:normal;color:#000;transform:scaleY(0.93);transform-origin:0 8.25px;">( 45.619)</div>
<div class="t" style="left:55.20px;top:629.55px;font-size:9.85px;line-height:9.85px;font-family:'Liberation Serif',serif;font-weight:bold;font-style:normal;color:#000;transform:scaleY(0.93);transform-origin:0 8.25px;">Điều chỉnh tăng, giảm thuế giá trị gia tăng còn được khấu trừ của các kỳ trước</div>
<div class="r" style="left:53.20px;top:626.50px;width:1.00px;height:15.70px;background:#2a2a2a"></div>
<div class="t" style="left:-557.40px;width:1200px;text-align:center;top:629.55px;font-size:9.85px;line-height:9.85px;font-family:'Liberation Serif',serif;font-weight:bold;font-style:normal;color:#000;transform:scaleY(0.93);transform-origin:0 8.25px;">IV</div>
<div class="t" style="left:55.20px;top:645.50px;font-size:9.55px;line-height:9.55px;font-family:'Liberation Serif',serif;font-weight:normal;font-style:normal;color:#000;transform:scaleY(0.93);transform-origin:0 8.00px;">Điều chỉnh giảm</div>
<div class="r" style="left:53.20px;top:642.20px;width:1.00px;height:15.60px;background:#2a2a2a"></div>
<div class="t" style="left:-557.40px;width:1200px;text-align:center;top:645.50px;font-size:9.55px;line-height:9.55px;font-family:'Liberation Serif',serif;font-weight:normal;font-style:normal;color:#000;transform:scaleY(0.93);transform-origin:0 8.00px;">1</div>
<div class="r" style="left:519.00px;top:642.20px;width:1.00px;height:15.60px;background:#2a2a2a"></div>
<div class="r" style="left:540.80px;top:642.20px;width:1.00px;height:15.60px;background:#2a2a2a"></div>
<div class="t" style="left:-69.60px;width:1200px;text-align:center;top:645.50px;font-size:9.55px;line-height:9.55px;font-family:'Liberation Serif',serif;font-weight:normal;font-style:normal;color:#000;transform:scaleY(0.93);transform-origin:0 8.00px;">[37]</div>
<div class="t" style="left:55.20px;top:661.10px;font-size:9.55px;line-height:9.55px;font-family:'Liberation Serif',serif;font-weight:normal;font-style:normal;color:#000;transform:scaleY(0.93);transform-origin:0 8.00px;">Điều chỉnh tăng</div>
<div class="r" style="left:53.20px;top:657.80px;width:1.00px;height:15.40px;background:#2a2a2a"></div>
<div class="t" style="left:-557.40px;width:1200px;text-align:center;top:661.10px;font-size:9.55px;line-height:9.55px;font-family:'Liberation Serif',serif;font-weight:normal;font-style:normal;color:#000;transform:scaleY(0.93);transform-origin:0 8.00px;">2</div>
<div class="r" style="left:519.00px;top:657.80px;width:1.00px;height:15.40px;background:#2a2a2a"></div>
<div class="r" style="left:540.80px;top:657.80px;width:1.00px;height:15.40px;background:#2a2a2a"></div>
<div class="t" style="left:-69.60px;width:1200px;text-align:center;top:661.10px;font-size:9.55px;line-height:9.55px;font-family:'Liberation Serif',serif;font-weight:normal;font-style:normal;color:#000;transform:scaleY(0.93);transform-origin:0 8.00px;">[38]</div>
<div class="t" style="left:55.20px;top:676.25px;font-size:9.85px;line-height:9.85px;font-family:'Liberation Serif',serif;font-weight:bold;font-style:normal;color:#000;transform:scaleY(0.93);transform-origin:0 8.25px;">Thuế giá trị gia tăng nhận bàn giao được khấu trừ trong kỳ</div>
<div class="r" style="left:53.20px;top:673.20px;width:1.00px;height:15.60px;background:#2a2a2a"></div>
<div class="t" style="left:-557.40px;width:1200px;text-align:center;top:676.25px;font-size:9.85px;line-height:9.85px;font-family:'Liberation Serif',serif;font-weight:bold;font-style:normal;color:#000;transform:scaleY(0.93);transform-origin:0 8.25px;">V</div>
<div class="r" style="left:519.00px;top:673.20px;width:1.00px;height:15.60px;background:#2a2a2a"></div>
<div class="r" style="left:540.80px;top:673.20px;width:1.00px;height:15.60px;background:#2a2a2a"></div>
<div class="t" style="left:-69.60px;width:1200px;text-align:center;top:676.25px;font-size:9.85px;line-height:9.85px;font-family:'Liberation Serif',serif;font-weight:bold;font-style:normal;color:#000;transform:scaleY(0.93);transform-origin:0 8.25px;">[39a]</div>
<div class="t" style="left:55.20px;top:691.85px;font-size:9.85px;line-height:9.85px;font-family:'Liberation Serif',serif;font-weight:bold;font-style:normal;color:#000;transform:scaleY(0.93);transform-origin:0 8.25px;">Xác định nghĩa vụ thuế giá trị gia tăng phải nộp trong kỳ:</div>
<div class="r" style="left:53.20px;top:688.80px;width:1.00px;height:15.60px;background:#2a2a2a"></div>
<div class="t" style="left:-557.40px;width:1200px;text-align:center;top:691.85px;font-size:9.85px;line-height:9.85px;font-family:'Liberation Serif',serif;font-weight:bold;font-style:normal;color:#000;transform:scaleY(0.93);transform-origin:0 8.25px;">VI</div>
<div class="t" style="left:55.20px;top:707.25px;font-size:9.85px;line-height:9.85px;font-family:'Liberation Serif',serif;font-weight:bold;font-style:normal;color:#000;transform:scaleY(0.93);transform-origin:0 8.25px;">Thuế giá trị gia tăng phải nộp của hoạt động sản xuất kinh doanh trong kỳ ([40a]=[36]-[22]+[37]-[38]-[39a] ≥ 0)</div>
<div class="t" style="left:55.20px;top:717.55px;font-size:9.85px;line-height:9.85px;font-family:'Liberation Serif',serif;font-weight:bold;font-style:normal;color:#000;transform:scaleY(0.93);transform-origin:0 8.25px;">nếu có)</div>
<div class="r" style="left:53.20px;top:704.40px;width:1.00px;height:26.00px;background:#2a2a2a"></div>
<div class="t" style="left:-557.40px;width:1200px;text-align:center;top:712.75px;font-size:9.85px;line-height:9.85px;font-family:'Liberation Serif',serif;font-weight:bold;font-style:normal;color:#000;transform:scaleY(0.93);transform-origin:0 8.25px;">1</div>
<div class="r" style="left:519.00px;top:704.40px;width:1.00px;height:26.00px;background:#2a2a2a"></div>
<div class="r" style="left:540.80px;top:704.40px;width:1.00px;height:26.00px;background:#2a2a2a"></div>
<div class="t" style="left:-69.60px;width:1200px;text-align:center;top:712.75px;font-size:9.85px;line-height:9.85px;font-family:'Liberation Serif',serif;font-weight:bold;font-style:normal;color:#000;transform:scaleY(0.93);transform-origin:0 8.25px;">[40a]</div>
<div class="t" style="left:55.20px;top:733.70px;font-size:9.55px;line-height:9.55px;font-family:'Liberation Serif',serif;font-weight:normal;font-style:normal;color:#000;transform:scaleY(0.93);transform-origin:0 8.00px;">Thuế giá trị gia tăng mua vào của dự án đầu tư được bù trừ với thuế giá trị gia tăng còn phải nộp</div>
<div class="r" style="left:53.20px;top:730.40px;width:1.00px;height:26.00px;background:#2a2a2a"></div>
<div class="t" style="left:-557.40px;width:1200px;text-align:center;top:733.45px;font-size:9.85px;line-height:9.85px;font-family:'Liberation Serif',serif;font-weight:bold;font-style:normal;color:#000;transform:scaleY(0.93);transform-origin:0 8.25px;">2</div>
<div class="r" style="left:519.00px;top:730.40px;width:1.00px;height:26.00px;background:#2a2a2a"></div>
<div class="r" style="left:540.80px;top:730.40px;width:1.00px;height:26.00px;background:#2a2a2a"></div>
<div class="t" style="left:-69.60px;width:1200px;text-align:center;top:733.70px;font-size:9.55px;line-height:9.55px;font-family:'Liberation Serif',serif;font-weight:normal;font-style:normal;color:#000;transform:scaleY(0.93);transform-origin:0 8.00px;">[40b]</div>
<div class="t" style="left:55.20px;top:759.45px;font-size:9.85px;line-height:9.85px;font-family:'Liberation Serif',serif;font-weight:bold;font-style:normal;color:#000;transform:scaleY(0.93);transform-origin:0 8.25px;">Thuế giá trị gia tăng còn phải nộp trong kỳ ([40]=[40a]-[40b])</div>
<div class="r" style="left:53.20px;top:756.40px;width:1.00px;height:15.60px;background:#2a2a2a"></div>
<div class="t" style="left:-557.40px;width:1200px;text-align:center;top:759.45px;font-size:9.85px;line-height:9.85px;font-family:'Liberation Serif',serif;font-weight:bold;font-style:normal;color:#000;transform:scaleY(0.93);transform-origin:0 8.25px;">3</div>
<div class="r" style="left:519.00px;top:756.40px;width:1.00px;height:15.60px;background:#2a2a2a"></div>
<div class="r" style="left:540.80px;top:756.40px;width:1.00px;height:15.60px;background:#2a2a2a"></div>
<div class="t" style="left:-69.60px;width:1200px;text-align:center;top:759.45px;font-size:9.85px;line-height:9.85px;font-family:'Liberation Serif',serif;font-weight:bold;font-style:normal;color:#000;transform:scaleY(0.93);transform-origin:0 8.25px;">[40]</div>
<div class="t" style="left:55.20px;top:775.05px;font-size:9.85px;line-height:9.85px;font-family:'Liberation Serif',serif;font-weight:bold;font-style:normal;color:#000;transform:scaleY(0.93);transform-origin:0 8.25px;">Thuế giá trị gia tăng chưa khấu trừ hết kỳ này ([41] = [36] - [22] + [37] - [38] -[39a] &lt; 0)</div>
<div class="r" style="left:53.20px;top:772.00px;width:1.00px;height:26.00px;background:#2a2a2a"></div>
<div class="t" style="left:-557.40px;width:1200px;text-align:center;top:775.05px;font-size:9.85px;line-height:9.85px;font-family:'Liberation Serif',serif;font-weight:bold;font-style:normal;color:#000;transform:scaleY(0.93);transform-origin:0 8.25px;">4</div>
<div class="r" style="left:519.00px;top:772.00px;width:1.00px;height:26.00px;background:#2a2a2a"></div>
<div class="r" style="left:540.80px;top:772.00px;width:1.00px;height:26.00px;background:#2a2a2a"></div>
<div class="t" style="left:-69.60px;width:1200px;text-align:center;top:775.05px;font-size:9.85px;line-height:9.85px;font-family:'Liberation Serif',serif;font-weight:bold;font-style:normal;color:#000;transform:scaleY(0.93);transform-origin:0 8.25px;">[41]</div>
<div class="t" style="left:-573.40px;width:1200px;text-align:right;top:775.05px;font-size:9.85px;line-height:9.85px;font-family:'Liberation Serif',serif;font-weight:bold;font-style:normal;color:#000;transform:scaleY(0.93);transform-origin:0 8.25px;">45.619</div>
<div class="t" style="left:55.20px;top:801.30px;font-size:9.55px;line-height:9.55px;font-family:'Liberation Serif',serif;font-weight:normal;font-style:normal;color:#000;transform:scaleY(0.93);transform-origin:0 8.00px;">Thuế giá trị gia tăng đề nghị hoàn</div>
<div class="r" style="left:53.20px;top:798.00px;width:1.00px;height:15.60px;background:#2a2a2a"></div>
<div class="t" style="left:-557.40px;width:1200px;text-align:center;top:801.05px;font-size:9.85px;line-height:9.85px;font-family:'Liberation Serif',serif;font-weight:bold;font-style:normal;color:#000;transform:scaleY(0.93);transform-origin:0 8.25px;">4.1</div>
<div class="r" style="left:519.00px;top:798.00px;width:1.00px;height:15.60px;background:#2a2a2a"></div>
<div class="r" style="left:540.80px;top:798.00px;width:1.00px;height:15.60px;background:#2a2a2a"></div>
<div class="t" style="left:-69.60px;width:1200px;text-align:center;top:801.30px;font-size:9.55px;line-height:9.55px;font-family:'Liberation Serif',serif;font-weight:normal;font-style:normal;color:#000;transform:scaleY(0.93);transform-origin:0 8.00px;">[42]</div>
<div class="t" style="left:55.20px;top:816.65px;font-size:9.85px;line-height:9.85px;font-family:'Liberation Serif',serif;font-weight:bold;font-style:normal;color:#000;transform:scaleY(0.93);transform-origin:0 8.25px;">Thuế giá trị gia tăng còn được khấu trừ chuyển kỳ sau ([43] = [41] - [42])</div>
<div class="r" style="left:53.20px;top:813.60px;width:1.00px;height:15.60px;background:#2a2a2a"></div>
<div class="t" style="left:-557.40px;width:1200px;text-align:center;top:816.65px;font-size:9.85px;line-height:9.85px;font-family:'Liberation Serif',serif;font-weight:bold;font-style:normal;color:#000;transform:scaleY(0.93);transform-origin:0 8.25px;">4.2</div>
<div class="r" style="left:519.00px;top:813.60px;width:1.00px;height:15.60px;background:#2a2a2a"></div>
<div class="r" style="left:540.80px;top:813.60px;width:1.00px;height:15.60px;background:#2a2a2a"></div>
<div class="t" style="left:-69.60px;width:1200px;text-align:center;top:816.65px;font-size:9.85px;line-height:9.85px;font-family:'Liberation Serif',serif;font-weight:bold;font-style:normal;color:#000;transform:scaleY(0.93);transform-origin:0 8.25px;">[43]</div>
<div class="t" style="left:-573.40px;width:1200px;text-align:right;top:816.65px;font-size:9.85px;line-height:9.85px;font-family:'Liberation Serif',serif;font-weight:bold;font-style:normal;color:#000;transform:scaleY(0.93);transform-origin:0 8.25px;">45.619</div>
<div class="r" style="left:31.50px;top:326.80px;width:598.10px;height:1.00px;background:#2a2a2a"></div>
<div class="r" style="left:31.50px;top:352.10px;width:598.10px;height:1.00px;background:#2a2a2a"></div>
<div class="r" style="left:31.50px;top:368.10px;width:598.10px;height:1.00px;background:#2a2a2a"></div>
<div class="r" style="left:31.50px;top:383.40px;width:598.10px;height:1.00px;background:#2a2a2a"></div>
<div class="r" style="left:31.50px;top:399.30px;width:598.10px;height:1.00px;background:#2a2a2a"></div>
<div class="r" style="left:31.50px;top:415.30px;width:598.10px;height:1.00px;background:#2a2a2a"></div>
<div class="r" style="left:31.50px;top:431.30px;width:598.10px;height:1.00px;background:#2a2a2a"></div>
<div class="r" style="left:31.50px;top:447.80px;width:598.10px;height:1.00px;background:#2a2a2a"></div>
<div class="r" style="left:31.50px;top:465.50px;width:598.10px;height:1.00px;background:#2a2a2a"></div>
<div class="r" style="left:31.50px;top:481.30px;width:598.10px;height:1.00px;background:#2a2a2a"></div>
<div class="r" style="left:31.50px;top:496.70px;width:598.10px;height:1.00px;background:#2a2a2a"></div>
<div class="r" style="left:31.50px;top:522.30px;width:598.10px;height:1.00px;background:#2a2a2a"></div>
<div class="r" style="left:31.50px;top:538.50px;width:598.10px;height:1.00px;background:#2a2a2a"></div>
<div class="r" style="left:31.50px;top:554.20px;width:598.10px;height:1.00px;background:#2a2a2a"></div>
<div class="r" style="left:31.50px;top:569.40px;width:598.10px;height:1.00px;background:#2a2a2a"></div>
<div class="r" style="left:31.50px;top:585.10px;width:598.10px;height:1.00px;background:#2a2a2a"></div>
<div class="r" style="left:31.50px;top:610.30px;width:598.10px;height:1.00px;background:#2a2a2a"></div>
<div class="r" style="left:31.50px;top:626.00px;width:598.10px;height:1.00px;background:#2a2a2a"></div>
<div class="r" style="left:31.50px;top:641.70px;width:598.10px;height:1.00px;background:#2a2a2a"></div>
<div class="r" style="left:31.50px;top:657.30px;width:598.10px;height:1.00px;background:#2a2a2a"></div>
<div class="r" style="left:31.50px;top:672.70px;width:598.10px;height:1.00px;background:#2a2a2a"></div>
<div class="r" style="left:31.50px;top:688.30px;width:598.10px;height:1.00px;background:#2a2a2a"></div>
<div class="r" style="left:31.50px;top:703.90px;width:598.10px;height:1.00px;background:#2a2a2a"></div>
<div class="r" style="left:31.50px;top:729.90px;width:598.10px;height:1.00px;background:#2a2a2a"></div>
<div class="r" style="left:31.50px;top:755.90px;width:598.10px;height:1.00px;background:#2a2a2a"></div>
<div class="r" style="left:31.50px;top:771.50px;width:598.10px;height:1.00px;background:#2a2a2a"></div>
<div class="r" style="left:31.50px;top:797.50px;width:598.10px;height:1.00px;background:#2a2a2a"></div>
<div class="r" style="left:31.50px;top:813.10px;width:598.10px;height:1.00px;background:#2a2a2a"></div>
<div class="r" style="left:31.50px;top:828.70px;width:598.10px;height:1.00px;background:#2a2a2a"></div>
<div class="r" style="left:31.00px;top:327.30px;width:1.30px;height:501.90px;background:#2a2a2a"></div>
<div class="r" style="left:629.10px;top:327.30px;width:1.00px;height:501.90px;background:#2a2a2a"></div>
<div class="r" style="left:16.00px;top:919.00px;width:60.00px;height:4.00px;background:#333"></div>
<div class="t" style="left:42.00px;width:1200px;text-align:center;top:916.77px;font-size:6px;line-height:6px;font-family:'Liberation Serif',serif;font-weight:normal;font-style:normal;color:#555;transform:scaleY(0.93);transform-origin:0 5.03px;">1</div></div>
<div class="r" style="left:1387.00px;top:88.00px;width:13.00px;height:679.00px;background:#fafafa"></div>
<div class="r" style="left:1390.00px;top:103.70px;width:7.40px;height:223.70px;background:#a3a3a3;border-radius:4px"></div>
<svg style="left:1388px;top:91px" width="11" height="8"><path d="M1.5 6 L5.5 1.8 L9.5 6 Z" fill="#a3a3a3"/></svg>
<svg style="left:1388px;top:755px" width="11" height="8"><path d="M1.5 1.8 L5.5 6 L9.5 1.8 Z" fill="#a3a3a3"/></svg>
</body></html>
